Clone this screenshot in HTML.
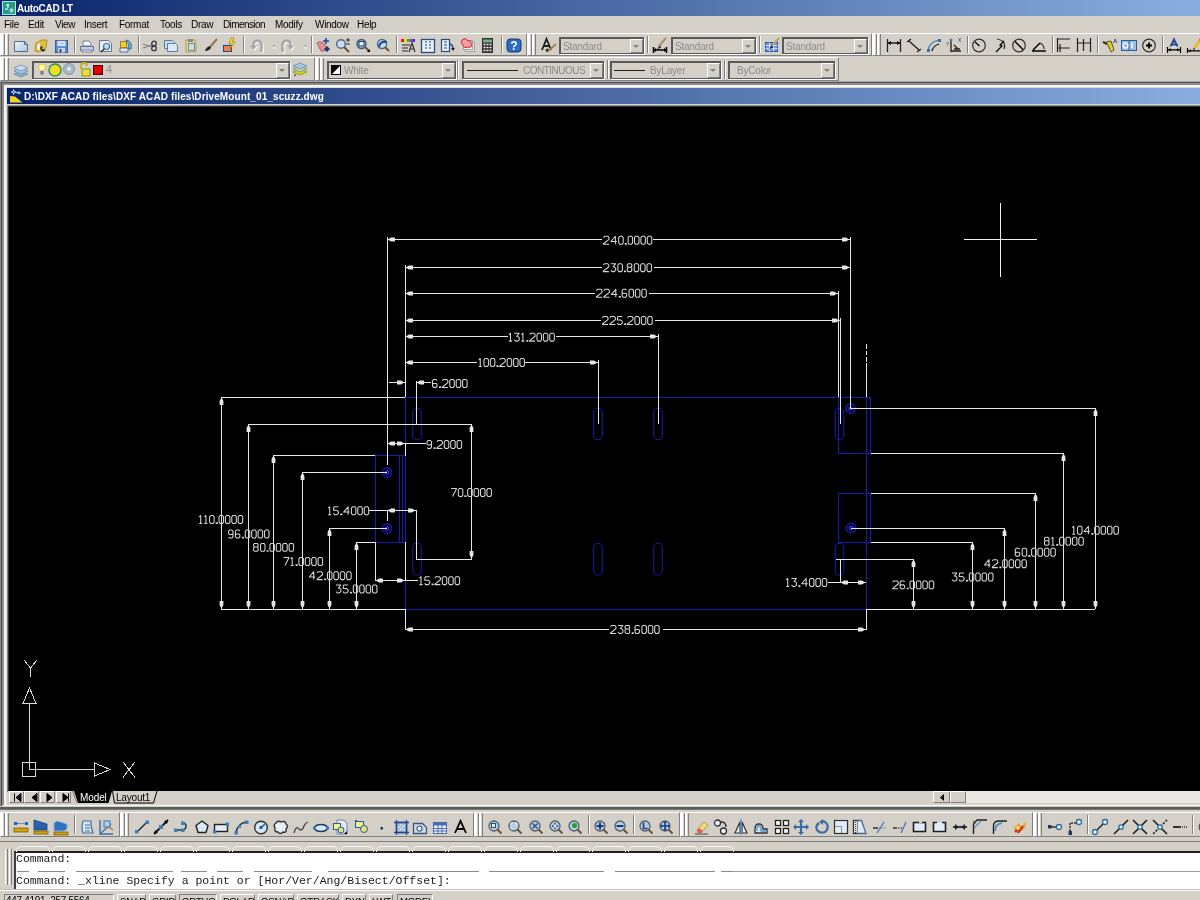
<!DOCTYPE html>
<html><head><meta charset="utf-8">
<style>
*{margin:0;padding:0;box-sizing:border-box}
html,body{width:1200px;height:900px;overflow:hidden;background:#d4d0c8;font-family:"Liberation Sans",sans-serif;font-size:11px;color:#000;position:relative}
#root{position:absolute;left:0;top:0;width:1200px;height:900px;overflow:hidden;will-change:transform}
.a{position:absolute}
#title{left:0;top:0;width:1200px;height:16px;background:linear-gradient(to right,#0a246a 0%,#8aaedf 100%)}
#title .t{left:17px;top:3px;color:#fff;font-weight:bold;font-size:10px;letter-spacing:-0.3px}
#menu{left:0;top:16px;width:1200px;height:17px;background:#d4d0c8}
#menu span{position:absolute;top:3px;font-size:10px;letter-spacing:-0.3px}
.tb{position:absolute;background:#d4d0c8;border-top:1px solid #fff;border-bottom:1px solid #808080;border-left:1px solid #fff;border-right:1px solid #808080}
.grip{position:absolute;top:0px;width:4px;bottom:0px;border-left:2px solid #fff;border-right:1px solid #808080}
.combo{position:absolute;background:#d4d0c8;border-top:2px solid #5a5a5a;border-left:2px solid #5a5a5a;border-bottom:1px solid #5a5a5a;border-right:1px solid #5a5a5a;box-shadow:1px 1px 0 #fff}
.combo .dd{position:absolute;right:0;top:0;width:13px;bottom:0;background:#d4d0c8;border-top:1px solid #fff;border-left:1px solid #fff;border-right:1px solid #808080;border-bottom:1px solid #808080}
.combo .dd:after{content:"";position:absolute;left:2px;top:5px;border-left:3px solid transparent;border-right:3px solid transparent;border-top:3px solid #808080}
.combo .txt{position:absolute;top:2px;color:#8c8c8c;font-size:10px;letter-spacing:-0.2px}
#canvas{left:8px;top:106px;width:1192px;height:685px;background:#000}
#dtitle{left:7px;top:88px;width:1200px;height:16px;background:linear-gradient(to right,#0a246a 0%,#8aaedf 100%)}
#dtitle .t{left:17px;top:3px;color:#fff;font-weight:bold;font-size:10px;letter-spacing:0.1px}
.navb{position:absolute;top:791px;width:15px;height:12px;background:#d4d0c8;border-top:1px solid #fff;border-left:1px solid #fff;border-right:1px solid #808080;border-bottom:1px solid #808080}
.ctab{position:absolute;top:846px;width:34px;height:6px;border:1px solid #f4f4f4;border-bottom:none;border-radius:5px 5px 0 0}
.cmd{font-family:"Liberation Mono",monospace;font-size:11.5px;color:#1a1a1a;white-space:pre}
.sb,.sp{position:absolute;top:894px;height:10px;overflow:hidden}
.sb{border-top:1px solid #fff;border-left:1px solid #fff;border-right:1px solid #808080}
.sp{border-top:1px solid #808080;border-left:1px solid #808080;border-right:1px solid #fff}
.sb span,.sp span{position:absolute;left:2px;top:0px;line-height:11px;font-size:9.5px;letter-spacing:-0.1px;white-space:nowrap}
</style></head><body><div id="root">
<div id="title" class="a">
  <svg width="16" height="16" style="position:absolute;left:2px;top:1px">
    <rect x="0.5" y="0.5" width="13" height="13" fill="#2a9a88" stroke="#9ff0e6"/>
    <path d="M4 4h3M6 3v4M9 9h1M3 8h3" stroke="#fff" stroke-width="1" fill="none"/>
    <circle cx="9.5" cy="9.5" r="1.5" stroke="#fff" fill="none"/>
  </svg>
  <div class="a t">AutoCAD LT</div>
</div>
<div id="menu" class="a">
  <span style="left:4px">File</span>
  <span style="left:28px">Edit</span>
  <span style="left:55px">View</span>
  <span style="left:84px">Insert</span>
  <span style="left:119px">Format</span>
  <span style="left:160px">Tools</span>
  <span style="left:191px">Draw</span>
  <span style="left:223px;letter-spacing:-0.6px">Dimension</span>
  <span style="left:275px">Modify</span>
  <span style="left:315px">Window</span>
  <span style="left:357px">Help</span>
</div>
<!--UI-->
<div class="tb" style="left:0px;top:33px;width:527px;height:23px"><div class="grip" style="left:0px"></div><div class="grip" style="left:4px"></div></div>
<div class="tb" style="left:527px;top:33px;width:345px;height:23px"><div class="grip" style="left:0px"></div><div class="grip" style="left:4px"></div></div>
<div class="tb" style="left:872px;top:33px;width:340px;height:23px"><div class="grip" style="left:0px"></div><div class="grip" style="left:4px"></div></div>
<div class="a" style="left:74px;top:36px;width:1px;height:17px;background:#808080"></div><div class="a" style="left:75px;top:36px;width:1px;height:17px;background:#fff"></div>
<div class="a" style="left:138px;top:36px;width:1px;height:17px;background:#808080"></div><div class="a" style="left:139px;top:36px;width:1px;height:17px;background:#fff"></div>
<div class="a" style="left:243px;top:36px;width:1px;height:17px;background:#808080"></div><div class="a" style="left:244px;top:36px;width:1px;height:17px;background:#fff"></div>
<div class="a" style="left:311px;top:36px;width:1px;height:17px;background:#808080"></div><div class="a" style="left:312px;top:36px;width:1px;height:17px;background:#fff"></div>
<div class="a" style="left:396px;top:36px;width:1px;height:17px;background:#808080"></div><div class="a" style="left:397px;top:36px;width:1px;height:17px;background:#fff"></div>
<div class="a" style="left:501px;top:36px;width:1px;height:17px;background:#808080"></div><div class="a" style="left:502px;top:36px;width:1px;height:17px;background:#fff"></div>
<div class="combo" style="left:559px;top:37px;width:85px;height:17px"><div class="dd"></div><div class="txt" style="left:2px">Standard</div></div>
<div class="combo" style="left:671px;top:37px;width:85px;height:17px"><div class="dd"></div><div class="txt" style="left:2px">Standard</div></div>
<div class="combo" style="left:782px;top:37px;width:86px;height:17px"><div class="dd"></div><div class="txt" style="left:2px">Standard</div></div>
<div class="a" style="left:647px;top:36px;width:1px;height:17px;background:#808080"></div><div class="a" style="left:648px;top:36px;width:1px;height:17px;background:#fff"></div>
<div class="a" style="left:759px;top:36px;width:1px;height:17px;background:#808080"></div><div class="a" style="left:760px;top:36px;width:1px;height:17px;background:#fff"></div>
<div class="a" style="left:967px;top:36px;width:1px;height:17px;background:#808080"></div><div class="a" style="left:968px;top:36px;width:1px;height:17px;background:#fff"></div>
<div class="a" style="left:1052px;top:36px;width:1px;height:17px;background:#808080"></div><div class="a" style="left:1053px;top:36px;width:1px;height:17px;background:#fff"></div>
<div class="a" style="left:1097px;top:36px;width:1px;height:17px;background:#808080"></div><div class="a" style="left:1098px;top:36px;width:1px;height:17px;background:#fff"></div>
<div class="a" style="left:1162px;top:36px;width:1px;height:17px;background:#808080"></div><div class="a" style="left:1163px;top:36px;width:1px;height:17px;background:#fff"></div>
<div class="tb" style="left:0px;top:57px;width:315px;height:24px"><div class="grip" style="left:0px"></div><div class="grip" style="left:4px"></div></div>
<div class="tb" style="left:315px;top:57px;width:524px;height:24px"><div class="grip" style="left:0px"></div><div class="grip" style="left:4px"></div></div>
<div class="combo" style="left:32px;top:61px;width:258px;height:18px"><div class="dd"></div></div>
<div class="a" style="left:93px;top:65px;width:10px;height:10px;background:#e00000;border:1px solid #400000"></div>
<div class="a" style="left:106px;top:63px;color:#8c8c8c;font-size:11px">4</div>
<div class="combo" style="left:327px;top:61px;width:129px;height:18px"><div class="dd"></div><div class="txt" style="left:15px">White</div></div>
<div class="a" style="left:457px;top:60px;width:1px;height:19px;background:#808080"></div><div class="a" style="left:458px;top:60px;width:1px;height:19px;background:#fff"></div>
<div class="combo" style="left:462px;top:61px;width:142px;height:18px"><div class="dd"></div><div class="txt" style="left:59px"><span style="letter-spacing:-0.5px">CONTINUOUS</span></div><div class="a" style="left:3px;top:7px;width:51px;height:1px;background:#202020"></div></div>
<div class="a" style="left:607px;top:60px;width:1px;height:19px;background:#808080"></div><div class="a" style="left:608px;top:60px;width:1px;height:19px;background:#fff"></div>
<div class="combo" style="left:610px;top:61px;width:111px;height:18px"><div class="dd"></div><div class="txt" style="left:38px">ByLayer</div><div class="a" style="left:2px;top:7px;width:31px;height:1px;background:#202020"></div></div>
<div class="a" style="left:724px;top:60px;width:1px;height:19px;background:#808080"></div><div class="a" style="left:725px;top:60px;width:1px;height:19px;background:#fff"></div>
<div class="combo" style="left:728px;top:61px;width:107px;height:18px"><div class="dd"></div><div class="txt" style="left:7px">ByColor</div></div>
<div class="tb" style="left:0px;top:812px;width:120px;height:25px"><div class="grip" style="left:0px"></div><div class="grip" style="left:4px"></div></div>
<div class="tb" style="left:120px;top:812px;width:354px;height:25px"><div class="grip" style="left:0px"></div><div class="grip" style="left:4px"></div></div>
<div class="tb" style="left:474px;top:812px;width:206px;height:25px"><div class="grip" style="left:0px"></div><div class="grip" style="left:4px"></div></div>
<div class="tb" style="left:680px;top:812px;width:353px;height:25px"><div class="grip" style="left:0px"></div><div class="grip" style="left:4px"></div></div>
<div class="tb" style="left:1033px;top:812px;width:180px;height:25px"><div class="grip" style="left:0px"></div><div class="grip" style="left:4px"></div></div>
<div class="a" style="left:74px;top:815px;width:1px;height:19px;background:#808080"></div><div class="a" style="left:75px;top:815px;width:1px;height:19px;background:#fff"></div>
<div class="a" style="left:588px;top:815px;width:1px;height:19px;background:#808080"></div><div class="a" style="left:589px;top:815px;width:1px;height:19px;background:#fff"></div>
<div class="a" style="left:633px;top:815px;width:1px;height:19px;background:#808080"></div><div class="a" style="left:634px;top:815px;width:1px;height:19px;background:#fff"></div>
<div class="a" style="left:1087px;top:815px;width:1px;height:19px;background:#808080"></div><div class="a" style="left:1088px;top:815px;width:1px;height:19px;background:#fff"></div>
<div class="a" style="left:1192px;top:815px;width:1px;height:19px;background:#808080"></div><div class="a" style="left:1193px;top:815px;width:1px;height:19px;background:#fff"></div>
<svg id="icons" width="1200" height="900" style="position:absolute;left:0;top:0;pointer-events:none"><g transform="translate(13,37)"><defs><linearGradient id="gnew" x1="0" y1="0" x2="1" y2="1"><stop offset="0" stop-color="#f4f8fc"/><stop offset="1" stop-color="#a8c4dc"/></linearGradient></defs><path d="M1.5 4.5h10l3 3v7h-13z" fill="url(#gnew)" stroke="#4c6c94"/><path d="M11.5 4.5v3h3" fill="none" stroke="#4c6c94"/></g>
<g transform="translate(33,37)"><path d="M2 14 L3 6 L9 3 L14 3 L13 11 L6 15 Z" fill="#e0c040" stroke="#b09020"/><path d="M4 8 L7 6 L7 13 L4 12Z" fill="#f0f0e0"/><path d="M8 9 Q6 12 9 14 L11 14 L9 12 Q8 11 10 10Z" fill="#202020"/><path d="M9 15 l4 -2 l-3 -1z" fill="#202020"/></g>
<g transform="translate(54,37)"><rect x="1.5" y="3.5" width="12" height="12" fill="#5a88cc" stroke="#3a5a98"/><rect x="3.5" y="4" width="8" height="5" fill="#e4eef8" stroke="#9ab4d8" stroke-width="0.6"/><path d="M5 6.5h5" stroke="#a0b0c8"/><rect x="4" y="11" width="7" height="4.5" fill="#c8d8ec"/><rect x="5.5" y="12" width="2" height="3.5" fill="#2a4a88"/></g>
<g transform="translate(79,37)"><path d="M4 4h6l2 2v3H4z" fill="#f8f8f8" stroke="#7080a0"/><path d="M1.5 9.5h13v4h-13z" fill="#c8d0e0" stroke="#6070a0"/><path d="M3 13h10v2H3z" fill="#e8ecf4" stroke="#6070a0" stroke-width="0.8"/></g>
<g transform="translate(98,37)"><path d="M1.5 3.5h9l3 3v8h-12z" fill="#e4ecf4" stroke="#607898"/><circle cx="8.5" cy="9.5" r="3" fill="#c8e0f0" stroke="#4a6a90" stroke-width="1.2"/><path d="M6.5 11.5 L3 15" stroke="#303030" stroke-width="1.5"/></g>
<g transform="translate(118,37)"><path d="M2 11 h8 v4 h-8z" fill="#e0e4f0" stroke="#6070a0"/><rect x="2.5" y="4.5" width="6" height="6" fill="#f0d030" stroke="#a08010"/><path d="M8 3 Q15 4 13 12 L10 12 Q12 6 8 5Z" fill="#60b0e0" stroke="#2a6090" stroke-width="0.8"/></g>
<g transform="translate(142,37)"><path d="M1 7 L10 10 M1 11 L10 8" stroke="#808080" stroke-width="1.3"/><circle cx="12" cy="6.5" r="2.3" fill="none" stroke="#303848" stroke-width="1.3"/><circle cx="12" cy="11.5" r="2.3" fill="none" stroke="#303848" stroke-width="1.3"/></g>
<g transform="translate(163,37)"><path d="M1.5 3.5h8l2 2v6h-10z" fill="#c8dcec" stroke="#5a7ca4"/><path d="M4.5 6.5h8l2 2v6h-10z" fill="#dce8f4" stroke="#5a7ca4"/></g>
<g transform="translate(183,37)"><path d="M3 3 h9 l1 3 v9 h-10z" fill="#e8d890" stroke="#b0a040"/><rect x="5" y="2" width="5" height="3" fill="#808890"/><rect x="5.5" y="6.5" width="6" height="7" fill="#c8dcec" stroke="#6a88a8"/></g>
<g transform="translate(203,37)"><path d="M14 2 L7 10" stroke="#8a7a60" stroke-width="2"/><path d="M7 9 Q3 10 2 14 Q6 14 8 11Z" fill="#202020"/></g>
<g transform="translate(222,37)"><rect x="1.5" y="8.5" width="8" height="6" fill="#f08050" stroke="#1a4a90"/><path d="M9 1 L7 7 L10 7 L8 12 L13 5 L10 5 L12 1Z" fill="#f8e030" stroke="#a08000" stroke-width="0.7"/></g>
<g transform="translate(249,37)"><g transform="translate(1,1)"><path d="M12 15 Q14.5 4 8.5 3.5 Q4 3.5 4.5 9" fill="none" stroke="#fff" stroke-width="2.6"/><path d="M1 8.5 L8 8.5 L4.5 13Z" fill="#fff"/></g><path d="M12 15 Q14.5 4 8.5 3.5 Q4 3.5 4.5 9" fill="none" stroke="#a8a8a8" stroke-width="2.6"/><path d="M1 8.5 L8 8.5 L4.5 13Z" fill="#a8a8a8"/></g>
<g transform="translate(279,37)"><g transform="translate(1,1)"><path d="M4 15 Q1.5 4 7.5 3.5 Q12 3.5 11.5 9" fill="none" stroke="#fff" stroke-width="2.6"/><path d="M15 8.5 L8 8.5 L11.5 13Z" fill="#fff"/></g><path d="M4 15 Q1.5 4 7.5 3.5 Q12 3.5 11.5 9" fill="none" stroke="#a8a8a8" stroke-width="2.6"/><path d="M15 8.5 L8 8.5 L11.5 13Z" fill="#a8a8a8"/></g>
<g transform="translate(315,37)"><path d="M2 6 Q4 3 8 6 L12 10 L10 14 L6 14 Z" fill="#e09090" stroke="#a05050" stroke-width="0.8"/><path d="M11 1v6M8 4h6" stroke="#1a4a90" stroke-width="1.6"/><path d="M9 12 l3 -3 l3 3 l-3 3z" fill="#1a3a70"/></g>
<g transform="translate(335,37)"><circle cx="6" cy="7" r="4.3" fill="#c8dcf0" stroke="#506880" stroke-width="1.4"/><path d="M9 10 L14 15" stroke="#705030" stroke-width="2"/><path d="M11 3h4M13 1v4M11 7h4" stroke="#303030" stroke-width="1"/></g>
<g transform="translate(355,37)"><circle cx="6.5" cy="7" r="4.5" fill="#a8c8e8" stroke="#405878" stroke-width="1.4"/><rect x="4" y="4.5" width="5" height="4.5" fill="#e8f0f8" stroke="#203860"/><path d="M10 10 L14 14" stroke="#705030" stroke-width="2"/><path d="M12 15 h3 v-3z" fill="#000"/></g>
<g transform="translate(375,37)"><circle cx="7" cy="7" r="4.5" fill="#c8dcf0" stroke="#506880" stroke-width="1.4"/><path d="M4 10 Q5 4 12 5" fill="none" stroke="#1a4a90" stroke-width="2"/><path d="M10 10 L14 14" stroke="#705030" stroke-width="2"/></g>
<g transform="translate(400,37)"><rect x="1" y="2" width="3" height="3" fill="#e02020"/><rect x="4" y="2" width="3" height="3" fill="#f0d020"/><rect x="7" y="2" width="3" height="3" fill="#20c020"/><rect x="10" y="2" width="3" height="3" fill="#c020e0"/><rect x="13" y="2" width="2" height="3" fill="#2040e0"/><path d="M2 8h8M2 11h6M2 14h6" stroke="#606060" stroke-width="1.5"/><path d="M9 15 L12 6 L15 15 M10 12h4" fill="none" stroke="#303030" stroke-width="1.2"/></g>
<g transform="translate(420,37)"><rect x="1.5" y="2.5" width="13" height="13" fill="#e8f0f8" stroke="#2a4a80" stroke-width="1.3"/><path d="M5 5h2M9 5h2M5 8h2M9 8h2M5 11h2M9 11h2" stroke="#5080b0" stroke-width="1.6"/></g>
<g transform="translate(440,37)"><rect x="1.5" y="2.5" width="8" height="12" fill="#e8f0f8" stroke="#2a4a80" stroke-width="1.2"/><path d="M4 5h3M4 8h3M4 11h3" stroke="#5080b0" stroke-width="1.4"/><path d="M9 7 Q13 7 13 12" fill="none" stroke="#2a4a80" stroke-width="1.5"/><path d="M11 11 l2 3 l2 -3z" fill="#202020"/></g>
<g transform="translate(460,37)"><rect x="5.5" y="5.5" width="9" height="9" fill="#e8e8e8" stroke="#a0a0a0"/><rect x="3.5" y="3.5" width="9" height="9" fill="#f0f0f0" stroke="#a0a0a0"/><path d="M2 3 Q6 0 8 4 Q12 3 11 7 Q13 11 8 10 Q4 12 3 8 Q0 6 2 3Z" fill="#f0a0a0" stroke="#d02020"/></g>
<g transform="translate(480,37)"><rect x="2" y="1" width="11" height="15" fill="#303030"/><rect x="3" y="2.5" width="9" height="3" fill="#80b080"/><path d="M3.5 7.5h2M6.5 7.5h2M9.5 7.5h2M3.5 10.5h2M6.5 10.5h2M9.5 10.5h2M3.5 13.5h2M6.5 13.5h2M9.5 13.5h2" stroke="#f0f0f0" stroke-width="1.4"/></g>
<g transform="translate(506,37)"><rect x="1" y="2" width="14" height="13" rx="3" fill="#2a6ac0" stroke="#1a3a80"/><text x="8" y="13" text-anchor="middle" font-family="Liberation Sans" font-weight="bold" font-size="12" fill="#fff">?</text></g>
<g transform="translate(266,37)"><path d="M6 8 L8 10 L10 8Z" fill="#a8a8a8"/><path d="M7 11h3" stroke="#fff"/></g>
<g transform="translate(297,37)"><path d="M6 8 L8 10 L10 8Z" fill="#a8a8a8"/><path d="M7 11h3" stroke="#fff"/></g>
<g transform="translate(541,37)"><path d="M1 13 L5.5 2 L10 13 M3 9h5" fill="none" stroke="#202020" stroke-width="1.8"/><path d="M15 7 L6 15" stroke="#a08050" stroke-width="2"/><path d="M5 14 l2 -2" stroke="#202020" stroke-width="2"/></g>
<g transform="translate(652,37)"><path d="M14 1 L7 9" stroke="#b09070" stroke-width="2"/><path d="M8 8 L5 12 L9 11Z" fill="#303030"/><path d="M1 13h14M1.5 10v6M14.5 10v6" stroke="#000" stroke-width="1.5"/><path d="M1 13 l3 -2 v4z M15 13 l-3 -2 v4z" fill="#000"/></g>
<g transform="translate(764,37)"><rect x="1.5" y="5.5" width="12" height="9" fill="#6a9ae0" stroke="#2a5ab0"/><path d="M1.5 8.5h12M1.5 11.5h12M5.5 5.5v9M9.5 5.5v9" stroke="#e8f0ff" stroke-width="0.8"/><path d="M15 1 L8 9" stroke="#c0a060" stroke-width="2"/><path d="M8 8 L5 12 L9 11Z" fill="#202020"/></g>
<g transform="translate(886,37)"><path d="M1.5 2v13M14.5 2v13M2 6h12" fill="none" stroke="#202020" stroke-width="1.3"/><path d="M2 6 l3 -2 v4z M14 6 l-3 -2 v4z" fill="#000"/></g>
<g transform="translate(906,37)"><path d="M1 5 L5 2 M11 15 L15 12 M3 4 L13 13" fill="none" stroke="#202020" stroke-width="1.3"/></g>
<g transform="translate(926,37)"><path d="M2 14 Q3 5 13 3" fill="none" stroke="#5090c0" stroke-width="1.3"/><path d="M6 14 Q7 9 13 7" fill="none" stroke="#202020" stroke-width="1.3"/><rect x="1" y="12" width="3" height="3" fill="#3a70a0"/><rect x="12" y="2" width="3" height="3" fill="#3a70a0"/></g>
<g transform="translate(946,37)"><path d="M5 4v11M5 14h10M8 8 L12 12M8 12h6" fill="none" stroke="#202020" stroke-width="1.3"/><circle cx="5" cy="3" r="1.5" fill="#5080b0"/><text x="0" y="9" font-size="5" fill="#303030" font-family="Liberation Sans">Y</text><text x="12" y="5" font-size="5" fill="#303030" font-family="Liberation Sans">X</text></g>
<g transform="translate(971,37)"><circle cx="8" cy="8.5" r="6.3" fill="none" stroke="#303030" stroke-width="1.2"/><path d="M4 5 L8.5 9" stroke="#000" stroke-width="1.3"/></g>
<g transform="translate(992,37)"><path d="M5 2 Q15 4 12 12" fill="none" stroke="#303030" stroke-width="1.2"/><path d="M12 4 L8 8 L10 9 L4 15" fill="none" stroke="#000" stroke-width="1.3"/></g>
<g transform="translate(1011,37)"><circle cx="8" cy="8.5" r="6.3" fill="none" stroke="#303030" stroke-width="1.2"/><path d="M4 4.5 L12 12.5" stroke="#000" stroke-width="1.3"/></g>
<g transform="translate(1031,37)"><path d="M1 14h14M2 13 L9 6" fill="none" stroke="#000" stroke-width="1.5"/><path d="M9 6 Q13 8 13 12" fill="none" stroke="#303030" stroke-width="1.2"/></g>
<g transform="translate(1056,37)"><path d="M1.5 1v14M14 2h-12M14 11h-12M4 7v8" fill="none" stroke="#202020" stroke-width="1.2"/></g>
<g transform="translate(1076,37)"><path d="M1.5 1v14M7.5 2v12M14.5 1v14M2 6h12" fill="none" stroke="#202020" stroke-width="1.2"/></g>
<g transform="translate(1101,37)"><path d="M2 5 L6 7" stroke="#303030" stroke-width="2"/><path d="M5 5 L10 4 L13 13 L10 15 L7 8Z" fill="#e0d020" stroke="#303030" stroke-width="0.8"/><text x="12" y="6" font-size="6" fill="#1a3a90" font-family="Liberation Sans" font-weight="bold">A</text></g>
<g transform="translate(1121,37)"><rect x="0.5" y="3.5" width="15" height="10" fill="#9ac0e8" stroke="#2a5a9a"/><path d="M8 3.5v10" stroke="#2a5a9a"/><circle cx="4.5" cy="8.5" r="2.5" fill="none" stroke="#fff" stroke-width="1.2"/><path d="M11 6v5" stroke="#fff" stroke-width="1.4"/></g>
<g transform="translate(1141,37)"><circle cx="8" cy="8.5" r="6.3" fill="none" stroke="#303030" stroke-width="1.2"/><path d="M5 8.5h6M8 5.5v6" stroke="#000" stroke-width="1.8"/></g>
<g transform="translate(1166,37)"><path d="M4.5 9.5 L8 2.5 L11.5 9.5 M6 7.5h4" fill="none" stroke="#2a4a90" stroke-width="2"/><path d="M5.5 10h5" stroke="#c8e8f0" stroke-width="1.5"/><path d="M1 12.8h14M1.5 10v6M14.5 10v6" stroke="#000" stroke-width="1.2"/><path d="M2 12.8 l3 -1.5 v3z M14 12.8 l-3 -1.5 v3z" fill="#000"/></g>
<g transform="translate(1186,37)"><path d="M15 2 L8.5 11" stroke="#e0c030" stroke-width="3"/><path d="M15 2 L13.5 4" stroke="#e08080" stroke-width="3"/><path d="M8.5 11 L7.5 13" stroke="#404040" stroke-width="1.5"/><path d="M1 13.8h14M1.5 11v5" stroke="#000" stroke-width="1.2"/><path d="M2 13.8 l3 -1.5 v3z" fill="#000"/></g>
<g transform="translate(13,63)"><path d="M1 11 L8 8 L15 11 L8 14Z" fill="#8ab0d0" stroke="#6a8aa8" stroke-width="0.8"/><path d="M1 8 L8 5 L15 8 L8 11Z" fill="#a8c8e0" stroke="#6a8aa8" stroke-width="0.8"/><path d="M1 5 L8 2 L15 5 L8 8Z" fill="#c8dcf0" stroke="#6a8aa8" stroke-width="0.8"/></g>
<g transform="translate(37,62)"><circle cx="5" cy="5.5" r="3.4" fill="#ffff90" stroke="#c8c040" stroke-width="0.8"/><rect x="3.5" y="9" width="3" height="3.5" fill="#7070a8"/></g>
<g transform="translate(47,62)"><circle cx="8" cy="8" r="6" fill="#f0e020" stroke="#3a8a60" stroke-width="1.5"/></g>
<g transform="translate(62,62)"><rect x="6" y="8" width="9" height="7" fill="#d0d0d0"/><circle cx="7" cy="7" r="5.5" fill="#a8b8c0" stroke="#8098a8"/><circle cx="7" cy="7" r="2" fill="#e0e8f0"/></g>
<g transform="translate(77,62)"><path d="M4 7 V4 Q4 1 7 1 Q10 1 10 4" fill="none" stroke="#c0b020" stroke-width="1.8"/><rect x="5" y="7" width="8" height="7" fill="#e8e040" stroke="#909010"/></g>
<g transform="translate(292,62)"><path d="M1 10 L8 7 L15 10 L8 13Z" fill="#e0d020" stroke="#909010" stroke-width="0.8"/><path d="M1 7 L8 4 L15 7 L8 10Z" fill="#c0d8a0" stroke="#6a8aa8" stroke-width="0.8"/><path d="M1 4 L8 1 L15 4 L8 7Z" fill="#a8c8e8" stroke="#6a8aa8" stroke-width="0.8"/><path d="M2 13 l2 -1 l-1 3z" fill="#1a3a80"/></g>
<g transform="translate(331,65)"><rect x="0.5" y="0.5" width="9" height="9" fill="#fff" stroke="#000"/><path d="M0.5 0.5 H9.5 L0.5 9.5Z" fill="#000"/></g>
<g transform="translate(13,819)"><rect x="1" y="3" width="3" height="3" fill="#2a60b0"/><rect x="12" y="3" width="3" height="3" fill="#2a60b0"/><path d="M4 4.5h8" stroke="#2a60b0" stroke-dasharray="1.5,1"/><rect x="1" y="9" width="14" height="4" fill="#d0a010" stroke="#806000" stroke-width="0.8"/></g>
<g transform="translate(33,819)"><path d="M1 1 L14 5 V11 H1Z" fill="#2a60b0" stroke="#1a4080" stroke-width="0.8"/><rect x="1" y="12" width="14" height="3" fill="#d0a010" stroke="#806000" stroke-width="0.8"/></g>
<g transform="translate(53,819)"><path d="M1 4 L4 2 L14 5 L14 10 L11 12 L1 12Z" fill="#3070c0" stroke="#80b0e0" stroke-width="1"/><rect x="1" y="13" width="14" height="3" fill="#d0a010" stroke="#806000" stroke-width="0.8"/></g>
<g transform="translate(80,819)"><path d="M3 2 h8 v3 M3 2 Q1 8 3 14 h10 Q11 8 11 5" fill="#d8e4f0" stroke="#3a70a8" stroke-width="1.2"/><path d="M5 6h5M5 9h5M5 12h5" stroke="#3a70a8"/></g>
<g transform="translate(98,819)"><path d="M2 1v14h13" fill="none" stroke="#3a70a8" stroke-width="1.4"/><path d="M2 15 L13 5" stroke="#3a70a8" stroke-width="1.2"/><rect x="6" y="2" width="6" height="6" fill="#a8d0f0" stroke="#3a70a8"/><path d="M11 8 L15 11" stroke="#c07030" stroke-width="1.5"/></g>
<g transform="translate(134,819)"><path d="M3 13 L13 3" stroke="#202830" stroke-width="1.5"/><rect x="1" y="11" width="3.5" height="3.5" fill="#3a80c0"/><rect x="11.5" y="1.5" width="3.5" height="3.5" fill="#3a80c0"/></g>
<g transform="translate(153,819)"><path d="M1 15 L15 1" stroke="#101010" stroke-width="1.8"/><rect x="6" y="6" width="4" height="4" fill="#3a80c0"/><path d="M1 15 l1 -4 l3 3z M15 1 l-4 1 l3 3z" fill="#000"/></g>
<g transform="translate(173,819)"><path d="M2 11h7 Q13 11 13 7 Q13 4 9 4" fill="none" stroke="#303030" stroke-width="1.5"/><rect x="1" y="9.5" width="3.5" height="3.5" fill="#3a80c0"/><rect x="8" y="9.5" width="3.5" height="3.5" fill="#3a80c0"/><rect x="8" y="2.5" width="3.5" height="3.5" fill="#3a80c0"/></g>
<g transform="translate(194,819)"><path d="M8 2 L14 6.5 L12 13.5 L4 13.5 L2 6.5Z" fill="#d8e8f8" stroke="#202020" stroke-width="1.4"/></g>
<g transform="translate(213,819)"><rect x="1.5" y="5.5" width="13" height="7" fill="#e0ecf8" stroke="#202020" stroke-width="1.4"/><rect x="0" y="11" width="3.5" height="3.5" fill="#3a80c0"/><rect x="12.5" y="3.5" width="3.5" height="3.5" fill="#3a80c0"/></g>
<g transform="translate(233,819)"><path d="M3 14 Q4 5 13 3" fill="none" stroke="#303030" stroke-width="1.4"/><rect x="1.5" y="12" width="3.5" height="3.5" fill="#3a80c0"/><rect x="12" y="1.5" width="3.5" height="3.5" fill="#3a80c0"/><rect x="5" y="6" width="3" height="3" fill="#3a80c0"/></g>
<g transform="translate(253,819)"><circle cx="8" cy="8.5" r="6.3" fill="#d8e8f8" stroke="#303030" stroke-width="1.4"/><path d="M8 8.5 L12 5" stroke="#1a60a0" stroke-width="1.5"/><rect x="6.5" y="7" width="3" height="3" fill="#1a60a0"/></g>
<g transform="translate(273,819)"><path d="M3 4 Q5 1 8 3 Q12 1 13 5 Q16 7 13 10 Q14 14 10 13 Q7 16 5 13 Q1 13 2 9 Q0 6 3 4Z" fill="#e8eef8" stroke="#303030" stroke-width="1.4"/></g>
<g transform="translate(293,819)"><path d="M1 14 Q3 6 6 10 Q9 13 11 7 Q12 4 15 3" fill="none" stroke="#404040" stroke-width="1.3"/></g>
<g transform="translate(313,819)"><ellipse cx="8" cy="9" rx="6.5" ry="3.5" fill="#d8e8f8" stroke="#1a3a60" stroke-width="1.6"/><rect x="0" y="7.5" width="3" height="3" fill="#3a80c0"/><rect x="13" y="7.5" width="3" height="3" fill="#3a80c0"/></g>
<g transform="translate(332,819)"><path d="M5 1h7l3 3v11h-10z" fill="#e0e8f4" stroke="#7080a0"/><rect x="1.5" y="4.5" width="7" height="6" fill="#f0f090" stroke="#2a5a9a"/><circle cx="9" cy="11" r="3" fill="#e0e080" stroke="#2a5a9a"/><path d="M12 15 h3 v-3z" fill="#000"/></g>
<g transform="translate(354,819)"><rect x="1.5" y="2.5" width="8" height="6" fill="#f0f090" stroke="#2a5a9a"/><circle cx="10" cy="10" r="3.5" fill="#e0e080" stroke="#2a5a9a"/><rect x="1" y="1" width="2" height="2" fill="#2a5a9a"/></g>
<g transform="translate(374,819)"><rect x="6.5" y="8" width="2.5" height="2.5" fill="#1a3a60"/></g>
<g transform="translate(393,819)"><rect x="3.5" y="3.5" width="10" height="10" fill="#c8d8e8" stroke="#1a4a90" stroke-width="1.5"/><path d="M1 3.5h15M1 13.5h15M3.5 1v15M13.5 1v15" stroke="#1a4a90" stroke-width="1.3"/><path d="M4 8 L8 4 M4 12 L12 4 M7 13 L13 7" stroke="#8090a0" stroke-width="0.8"/></g>
<g transform="translate(412,819)"><path d="M1.5 4.5h9l4 4v6h-13z" fill="#c8dcf0" stroke="#405878" stroke-width="1.3"/><circle cx="7.5" cy="9.5" r="2.5" fill="#fff" stroke="#405878" stroke-width="1.2"/></g>
<g transform="translate(432,819)"><rect x="1.5" y="3.5" width="13" height="11" fill="#f0f4fc" stroke="#4a6ab0"/><rect x="1.5" y="3.5" width="13" height="3" fill="#4a6ab0"/><path d="M1.5 9.5h13M1.5 12h13M6 6v9M10 6v9" stroke="#4a6ab0"/></g>
<g transform="translate(453,819)"><path d="M2 14 L7.5 2 L13 14 M4.5 10h6" fill="none" stroke="#000" stroke-width="1.8"/></g>
<g transform="translate(487,819)"><circle cx="7" cy="7" r="5" fill="#b8cce0" stroke="#506070" stroke-width="1.3"/><rect x="4.5" y="4.5" width="4" height="4" fill="#e0f0ff" stroke="#2a4a80"/><path d="M10.5 10.5 L14.5 14.5" stroke="#705030" stroke-width="2"/></g>
<g transform="translate(507,819)"><circle cx="7" cy="7" r="5" fill="#b8cce0" stroke="#506070" stroke-width="1.3"/><path d="M4 4h2M4 4v2M10 4h-2M10 4v2M4 10h2M4 10v-2" stroke="#e0f0ff" stroke-width="1.2"/><path d="M10.5 10.5 L14.5 14.5" stroke="#705030" stroke-width="2"/></g>
<g transform="translate(528,819)"><circle cx="7" cy="7" r="5" fill="#b8cce0" stroke="#506070" stroke-width="1.3"/><path d="M4.5 4.5 L9.5 9.5 M9.5 4.5 L4.5 9.5" stroke="#2a4a80" stroke-width="1.4"/><path d="M10.5 10.5 L14.5 14.5" stroke="#705030" stroke-width="2"/></g>
<g transform="translate(548,819)"><circle cx="7" cy="7" r="5" fill="#b8cce0" stroke="#506070" stroke-width="1.3"/><path d="M7 4v6M4 7h6" stroke="#1a3a80" stroke-width="1.4"/><circle cx="7" cy="7" r="1.5" fill="#e0f0ff"/><path d="M10.5 10.5 L14.5 14.5" stroke="#705030" stroke-width="2"/></g>
<g transform="translate(567,819)"><circle cx="7" cy="7" r="5" fill="#b8cce0" stroke="#506070" stroke-width="1.3"/><circle cx="7.5" cy="6.5" r="2.5" fill="#20a030"/><path d="M10.5 10.5 L14.5 14.5" stroke="#705030" stroke-width="2"/></g>
<g transform="translate(593,819)"><circle cx="7" cy="7" r="5" fill="#b8cce0" stroke="#506070" stroke-width="1.3"/><path d="M7 3.5v7M3.5 7h7" stroke="#1a3a80" stroke-width="2"/><path d="M10.5 10.5 L14.5 14.5" stroke="#705030" stroke-width="2"/></g>
<g transform="translate(613,819)"><circle cx="7" cy="7" r="5" fill="#b8cce0" stroke="#506070" stroke-width="1.3"/><path d="M3.5 7h7" stroke="#1a3a80" stroke-width="2"/><path d="M10.5 10.5 L14.5 14.5" stroke="#705030" stroke-width="2"/></g>
<g transform="translate(638,819)"><circle cx="7" cy="7" r="5" fill="#b8cce0" stroke="#506070" stroke-width="1.3"/><path d="M5.5 3.5v6h4" fill="none" stroke="#1a3a80" stroke-width="1.6"/><path d="M10.5 10.5 L14.5 14.5" stroke="#705030" stroke-width="2"/></g>
<g transform="translate(658,819)"><circle cx="7" cy="7" r="5" fill="#b8cce0" stroke="#506070" stroke-width="1.3"/><path d="M7 3v8M3 7h8" stroke="#1a3a80" stroke-width="1.6"/><path d="M7 2 l-2 2h4z M7 12 l-2 -2h4z M2 7 l2 -2v4z M12 7 l-2 -2v4z" fill="#1a3a80"/><path d="M10.5 10.5 L14.5 14.5" stroke="#705030" stroke-width="2"/></g>
<g transform="translate(693,819)"><path d="M2 15h13" stroke="#404040"/><path d="M4 11 L11 3 L15 6 L8 14 L5 14Z" fill="#f0e070" stroke="#a08040" stroke-width="0.8"/><path d="M4 11 L6 9 L10 12 L8 14 L5 14Z" fill="#e06060"/></g>
<g transform="translate(713,819)"><circle cx="4.5" cy="4" r="3" fill="#e8f0f8" stroke="#303030" stroke-width="1.3"/><circle cx="10.5" cy="12" r="3" fill="#e8f0f8" stroke="#303030" stroke-width="1.3"/><path d="M8 3 Q13 3 13 8" fill="none" stroke="#303030" stroke-width="1.4"/></g>
<g transform="translate(733,819)"><path d="M7 3 L2 14h5z M9 3 L14 14h-5z" fill="#e8f0f8" stroke="#303030" stroke-width="1.2"/><path d="M8 0v16" stroke="#5090d0" stroke-width="1.5"/></g>
<g transform="translate(753,819)"><path d="M2 14 V10 Q2 5 6 5 Q10 5 10 10 H14 V14Z" fill="#d8e8f8" stroke="#303030" stroke-width="1.3"/><path d="M4 12 V10 Q4 7 6 7 Q8 7 8 10 V12 H14" fill="none" stroke="#5090d0" stroke-width="1.3"/></g>
<g transform="translate(774,819)"><rect x="1.5" y="1.5" width="5" height="5" fill="#fff" stroke="#202020" stroke-width="1.3"/><rect x="9.5" y="1.5" width="5" height="5" fill="#fff" stroke="#202020" stroke-width="1.3"/><rect x="1.5" y="9.5" width="5" height="5" fill="#fff" stroke="#202020" stroke-width="1.3"/><rect x="9.5" y="9.5" width="5" height="5" fill="#fff" stroke="#202020" stroke-width="1.3"/></g>
<g transform="translate(793,819)"><path d="M8 1v14M1 8h14" stroke="#3a6aa8" stroke-width="2.2"/><path d="M8 0 l-3 3h6z M8 16 l-3 -3h6z M0 8 l3 -3v6z M16 8 l-3 -3v6z" fill="#3a6aa8"/></g>
<g transform="translate(814,819)"><path d="M5 4 Q1 7 3 11 Q6 15 11 13 Q15 10 13 5 Q11 2 8 2" fill="none" stroke="#3a6aa8" stroke-width="2.2"/><path d="M9 0 L5 3 L9 6z" fill="#3a6aa8"/></g>
<g transform="translate(833,819)"><rect x="1.5" y="1.5" width="13" height="13" fill="#e0ecf8" stroke="#303030" stroke-width="1.2"/><path d="M1.5 7.5h7v7" fill="none" stroke="#303030" stroke-dasharray="1,1"/></g>
<g transform="translate(852,819)"><rect x="1.5" y="1.5" width="4" height="13" fill="#f8f8f8" stroke="#303030" stroke-width="1.3"/><path d="M5.5 1.5h4 L14 14.5h-8.5" fill="#dce8f4" stroke="#4a6a90" stroke-width="1.3"/><path d="M3.5 3v11" stroke="#303030" stroke-dasharray="1,1"/></g>
<g transform="translate(872,819)"><path d="M1 9h5" stroke="#303030" stroke-width="1.5"/><path d="M7 9h7" stroke="#5080b0" stroke-dasharray="1.5,1"/><path d="M5 14 L12 3" stroke="#4a70c0" stroke-width="1.3"/></g>
<g transform="translate(892,819)"><path d="M1 9h4" stroke="#303030" stroke-width="1.5"/><path d="M6 9h4" stroke="#303030" stroke-dasharray="1.5,1"/><path d="M9 14 L14 3" stroke="#4a70c0" stroke-width="1.3"/></g>
<g transform="translate(912,819)"><rect x="1.5" y="3.5" width="12" height="9" fill="#e0ecf8" stroke="#202020" stroke-width="1.6"/><path d="M7 3h3" stroke="#d4d0c8" stroke-width="2"/></g>
<g transform="translate(932,819)"><path d="M5 3.5 H1.5v9h12v-9H10" fill="#e0ecf8" stroke="#202020" stroke-width="1.6"/></g>
<g transform="translate(952,819)"><path d="M1 8h14" stroke="#202020" stroke-width="1.8"/><path d="M7 8 l-4 -3v6z M9 8 l4 -3v6z" fill="#202838"/></g>
<g transform="translate(972,819)"><path d="M1.5 15V5 L5 1h10" fill="none" stroke="#202020" stroke-width="1.4"/><path d="M2 9 L9 2" stroke="#5090d0" stroke-width="1.3"/><path d="M1.5 2v12" stroke="#202020" stroke-dasharray="1,1.5"/></g>
<g transform="translate(992,819)"><path d="M1.5 15V7 Q1.5 2 7 2h8" fill="none" stroke="#202020" stroke-width="1.4"/><path d="M3 12 Q3 5 10 4" fill="none" stroke="#5090d0" stroke-width="2"/></g>
<g transform="translate(1012,819)"><path d="M4 14 L2 9 L7 4 L10 8 L14 2 L13 9 L8 13Z" fill="#e8a030"/><path d="M3 13 L7 9 M6 14 L11 7" stroke="#d02020" stroke-width="2"/><circle cx="6" cy="9" r="2" fill="#f0e060"/></g>
<g transform="translate(1047,819)"><rect x="1" y="6" width="3.5" height="3.5" fill="#1a3a60"/><path d="M4 8h6" stroke="#303030" stroke-width="1.5"/><circle cx="12" cy="8" r="2.5" fill="#e8f4ff" stroke="#2a6aa0" stroke-width="1.3"/></g>
<g transform="translate(1067,819)"><path d="M3 12V4h9" fill="none" stroke="#303030" stroke-width="1.5" stroke-dasharray="2,1"/><circle cx="12" cy="3" r="2.5" fill="#e8f4ff" stroke="#2a6aa0" stroke-width="1.3"/><rect x="1.5" y="12" width="3.5" height="4" fill="#1a3a60"/></g>
<g transform="translate(1092,819)"><path d="M3 13 L13 3" stroke="#202020" stroke-width="1.4"/><circle cx="3" cy="13" r="2.5" fill="#e8f4ff" stroke="#2a6aa0" stroke-width="1.3"/><circle cx="13" cy="3" r="2.5" fill="#e8f4ff" stroke="#2a6aa0" stroke-width="1.3"/></g>
<g transform="translate(1113,819)"><path d="M1 15 L15 1" stroke="#202020" stroke-width="1.6"/><circle cx="8" cy="8" r="2.2" fill="#e8f4ff" stroke="#2a6aa0" stroke-width="1.3"/></g>
<g transform="translate(1132,819)"><path d="M1 1 L15 15 M15 1 L1 15" stroke="#202020" stroke-width="1.6"/><circle cx="8" cy="8" r="2.2" fill="#e8f4ff" stroke="#2a6aa0" stroke-width="1.3"/></g>
<g transform="translate(1152,819)"><path d="M1 1 L15 15" stroke="#202020" stroke-width="1.6"/><path d="M15 1 L1 15" stroke="#202020" stroke-width="1.6" stroke-dasharray="2,1.5"/><circle cx="8" cy="8" r="2.2" fill="#e8f4ff" stroke="#2a6aa0" stroke-width="1.3"/></g>
<g transform="translate(1172,819)"><path d="M1 8h8" stroke="#303030" stroke-width="2"/><path d="M10 8h5" stroke="#303030" stroke-width="1.5" stroke-dasharray="1,1"/></g>
<g transform="translate(1197,819)"><circle cx="8" cy="8" r="6" fill="#a0a0a0" stroke="#404040"/></g></svg>
<!--/UI-->
<!-- MDI client edge -->
<div class="a" style="left:0;top:81px;width:1200px;height:1px;background:#a8a8a8"></div>
<div class="a" style="left:0;top:81px;width:1px;height:726px;background:#8a8a8a"></div>
<div class="a" style="left:1px;top:82px;width:1199px;height:1px;background:#505050"></div>
<div class="a" style="left:1px;top:82px;width:1px;height:725px;background:#484848"></div>
<div class="a" style="left:2px;top:83px;width:1198px;height:2px;background:#8c8c8c"></div>
<div class="a" style="left:2px;top:83px;width:2px;height:722px;background:#8e8e8e"></div>
<div class="a" style="left:4px;top:85px;width:1196px;height:2px;background:#f4f4f0"></div>
<div class="a" style="left:4px;top:85px;width:2px;height:720px;background:#f4f4f0"></div>
<div class="a" style="left:6px;top:87px;width:1194px;height:1px;background:#dcdcd8"></div>
<div class="a" style="left:6px;top:87px;width:1px;height:718px;background:#dcdcd8"></div>
<div id="dtitle" class="a">
  <svg width="18" height="16" style="position:absolute;left:0px;top:0px">
    <path d="M3 8 L8 8.5 L15.5 14.5 L3 14.5 Z" fill="#f4d020"/>
    <path d="M6.6 1 L7.6 3 L9.6 4 L7.6 5 L6.6 7 L5.6 5 L3.6 4 L5.6 3 Z" fill="#e8f4ff"/>
    <path d="M8 4.3 L12.5 5" stroke="#b0d0f0" stroke-width="1.2"/>
    <path d="M11.5 3 L14.5 5.3 L11 6.5 Z" fill="#a0c0e8"/>
    <circle cx="6.6" cy="4" r="1" fill="#406080"/>
  </svg>
  <div class="a t">D:\DXF ACAD files\DXF ACAD files\DriveMount_01_scuzz.dwg</div>
</div>
<div id="canvas" class="a"></div>
<div class="a" style="left:7px;top:105px;width:1px;height:687px;background:#808080"></div>
<div class="a" style="left:8px;top:106px;width:1px;height:685px;background:#303030"></div>
<div class="a" style="left:7px;top:105px;width:1193px;height:1px;background:#9a9a9a"></div>
<div class="a" style="left:8px;top:106px;width:1192px;height:1px;background:#303030"></div>
<!-- tab row -->
<div class="a" style="left:8px;top:791px;width:1192px;height:12px;background:#d4d0c8"></div>
<div class="navb" style="left:9px"></div><div class="navb" style="left:24px"></div><div class="navb" style="left:40px"></div><div class="navb" style="left:56px"></div>
<svg width="200" height="14" style="position:absolute;left:0;top:790px">
 <path d="M14.5 3.5v8M21 3.5 L16 7.5 L21 11.5Z M37 3.5 L32 7.5 L37 11.5Z M47 3.5 L52 7.5 L47 11.5Z M63 3.5 L68 7.5 L63 11.5Z M68.5 3.5v8" fill="#000" stroke="#000" stroke-width="1"/>
 <path d="M74 1 L78 13 L108.5 13 L112 1Z" fill="#000"/>
 <path d="M72.5 1 L77 13" stroke="#808080" fill="none"/>
 <path d="M112.5 1 L114.5 13 L153.5 13 L157 1" fill="#d4d0c8" stroke="#000" stroke-width="1"/>
</svg>
<div class="a" style="left:80px;top:792px;color:#fff;font-size:10px;letter-spacing:-0.1px">Model</div>
<div class="a" style="left:116px;top:792px;color:#000;font-size:10px;letter-spacing:-0.2px">Layout1</div>
<div class="a" style="left:933px;top:791px;width:267px;height:12px;background:#e9e7e2"></div>
<div class="navb" style="left:933px;width:17px"></div><div class="navb" style="left:950px;width:16px"></div>
<svg width="10" height="10" style="position:absolute;left:938px;top:792px"><path d="M6 2 L2 5.5 L6 9Z" fill="#000"/></svg>
<div class="a" style="left:4px;top:805px;width:1196px;height:1px;background:#fcfcf8"></div>
<div class="a" style="left:0;top:806px;width:1200px;height:1px;background:#c8c8c4"></div>
<div class="a" style="left:0;top:807px;width:1200px;height:2px;background:#5c5c58"></div>
<div class="a" style="left:0;top:809px;width:1200px;height:1px;background:#747470"></div>
<div class="a" style="left:0;top:841px;width:1200px;height:1px;background:#808080"></div>
<!-- command window -->
<div class="a" style="left:14px;top:846px;width:1186px;height:6px;background:#d4d0c8"></div>
<div class="a" style="left:14px;top:851px;width:1186px;height:38px;background:#fff;border-top:2px solid #202020;border-left:2px solid #404040"></div>
<div class="a" style="left:5px;top:849px;width:3px;height:36px;border-left:1px solid #fff;border-right:1px solid #808080"></div>
<div class="a" style="left:9px;top:849px;width:3px;height:36px;border-left:1px solid #fff;border-right:1px solid #808080"></div>
<div class="ctab" style="left:16px"></div><div class="ctab" style="left:52px"></div><div class="ctab" style="left:88px"></div><div class="ctab" style="left:124px"></div><div class="ctab" style="left:160px"></div><div class="ctab" style="left:196px"></div><div class="ctab" style="left:232px"></div><div class="ctab" style="left:268px"></div><div class="ctab" style="left:304px"></div><div class="ctab" style="left:340px"></div><div class="ctab" style="left:376px"></div><div class="ctab" style="left:412px"></div><div class="ctab" style="left:448px"></div><div class="ctab" style="left:484px"></div><div class="ctab" style="left:520px"></div><div class="ctab" style="left:556px"></div><div class="ctab" style="left:592px"></div><div class="ctab" style="left:628px"></div><div class="ctab" style="left:664px"></div><div class="ctab" style="left:700px"></div>
<div class="a" style="left:733px;top:871px;width:467px;height:1px;background:#a0a0a0"></div>
<div class="a" style="left:17px;top:871px;width:12px;height:1px;background:#8a8a8a"></div><div class="a" style="left:38px;top:871px;width:27px;height:1px;background:#8a8a8a"></div><div class="a" style="left:76px;top:871px;width:97px;height:1px;background:#8a8a8a"></div><div class="a" style="left:181px;top:871px;width:26px;height:1px;background:#8a8a8a"></div><div class="a" style="left:217px;top:871px;width:26px;height:1px;background:#8a8a8a"></div><div class="a" style="left:254px;top:871px;width:58px;height:1px;background:#8a8a8a"></div><div class="a" style="left:328px;top:871px;width:151px;height:1px;background:#8a8a8a"></div><div class="a" style="left:489px;top:871px;width:115px;height:1px;background:#8a8a8a"></div><div class="a" style="left:615px;top:871px;width:100px;height:1px;background:#8a8a8a"></div><div class="a" style="left:721px;top:871px;width:12px;height:1px;background:#8a8a8a"></div>
<div class="a cmd" style="left:16px;top:852px">Command:</div>
<div class="a cmd" style="left:16px;top:874px">Command: _xline Specify a point or [Hor/Ver/Ang/Bisect/Offset]:</div>
<div class="a" style="left:0;top:889px;width:1200px;height:1px;background:#c0c0c0"></div>
<div class="a" style="left:0;top:890px;width:1200px;height:1px;background:#fff"></div>
<!-- status bar -->
<div class="sp" style="left:4px;width:110px"><span style="left:1px;font-size:10px;letter-spacing:-0.3px">447.4191, 257.5564</span></div>
<div class="sb" style="left:117px;width:29px"><span>SNAP</span></div>
<div class="sb" style="left:149px;width:27px"><span>GRID</span></div>
<div class="sp" style="left:179px;width:38px"><span>ORTHO</span></div>
<div class="sb" style="left:220px;width:35px"><span>POLAR</span></div>
<div class="sb" style="left:258px;width:36px"><span>OSNAP</span></div>
<div class="sb" style="left:297px;width:42px"><span>OTRACK</span></div>
<div class="sb" style="left:342px;width:24px"><span>DYN</span></div>
<div class="sb" style="left:369px;width:24px"><span>LWT</span></div>
<div class="sp" style="left:397px;width:36px"><span>MODEL</span></div>
<svg id="draw" width="1200" height="900" style="font-family:'Liberation Sans',sans-serif;font-size:12px;will-change:transform" shape-rendering="crispEdges">
<g fill="#d6d6d6" style="shape-rendering:auto">
</g>
<rect x="405.5" y="397.5" width="461.0" height="212.0" fill="none" stroke="#1a1ab0"/>
<rect x="375.5" y="455.5" width="30.0" height="87.0" fill="none" stroke="#1a1ab0"/>
<line x1="399.5" y1="455.5" x2="399.5" y2="542.5" stroke="#1a1ab0"/>
<line x1="402.5" y1="455.5" x2="402.5" y2="542.5" stroke="#1a1ab0"/>
<rect x="838.5" y="397.5" width="32.0" height="56.0" fill="none" stroke="#1a1ab0"/>
<rect x="838.5" y="493.5" width="32.0" height="49.0" fill="none" stroke="#1a1ab0"/>
<circle cx="387" cy="472.5" r="4.8" fill="#06063a" stroke="#1a1ab0" stroke-width="1.2" shape-rendering="auto"/>
<circle cx="387" cy="472.5" r="1.6" fill="none" stroke="#4848ff" shape-rendering="auto"/>
<circle cx="387" cy="528.5" r="4.8" fill="#06063a" stroke="#1a1ab0" stroke-width="1.2" shape-rendering="auto"/>
<circle cx="387" cy="528.5" r="1.6" fill="none" stroke="#4848ff" shape-rendering="auto"/>
<circle cx="850.5" cy="408.5" r="4.8" fill="#06063a" stroke="#1a1ab0" stroke-width="1.2" shape-rendering="auto"/>
<circle cx="850.5" cy="408.5" r="1.6" fill="none" stroke="#4848ff" shape-rendering="auto"/>
<circle cx="851" cy="528" r="4.8" fill="#06063a" stroke="#1a1ab0" stroke-width="1.2" shape-rendering="auto"/>
<circle cx="851" cy="528" r="1.6" fill="none" stroke="#4848ff" shape-rendering="auto"/>
<rect x="412.75" y="408.5" width="8.5" height="31.0" rx="3.6" ry="4.2" fill="none" stroke="#1a1ab0" shape-rendering="auto"/>
<rect x="412.75" y="543.5" width="8.5" height="31.5" rx="3.6" ry="4.2" fill="none" stroke="#1a1ab0" shape-rendering="auto"/>
<rect x="593.75" y="408.5" width="8.5" height="31.0" rx="3.6" ry="4.2" fill="none" stroke="#1a1ab0" shape-rendering="auto"/>
<rect x="593.75" y="543.5" width="8.5" height="31.5" rx="3.6" ry="4.2" fill="none" stroke="#1a1ab0" shape-rendering="auto"/>
<rect x="653.75" y="408.5" width="8.5" height="31.0" rx="3.6" ry="4.2" fill="none" stroke="#1a1ab0" shape-rendering="auto"/>
<rect x="653.75" y="543.5" width="8.5" height="31.5" rx="3.6" ry="4.2" fill="none" stroke="#1a1ab0" shape-rendering="auto"/>
<rect x="835.25" y="408.5" width="8.5" height="31.0" rx="3.6" ry="4.2" fill="none" stroke="#1a1ab0" shape-rendering="auto"/>
<rect x="835.25" y="543.5" width="8.5" height="31.5" rx="3.6" ry="4.2" fill="none" stroke="#1a1ab0" shape-rendering="auto"/>
<line x1="387" y1="239.5" x2="602" y2="239.5" stroke="#e6e6e6" />
<line x1="652.75" y1="239.5" x2="850" y2="239.5" stroke="#e6e6e6" />
<g fill="none" stroke="#d6d6d6" stroke-width="1.05" stroke-linejoin="round" shape-rendering="auto"><path transform="translate(603.50,236.25) scale(1,0.88)" d="M0,1.5 L1,0 H4.5 L5.5,1.5 V3.5 L0,8.5 V9 H5.5" vector-effect="non-scaling-stroke"/><path transform="translate(610.90,236.25) scale(1,0.88)" d="M4.5,9 V0 L0,6 H6" vector-effect="non-scaling-stroke"/><path transform="translate(618.70,236.25) scale(1,0.88)" d="M1,0 H3.5 L4.5,1.5 V7.5 L3.5,9 H1 L0,7.5 V1.5 Z" vector-effect="non-scaling-stroke"/><path transform="translate(625.10,236.25) scale(1,0.88)" d="M0.1,8.3 H1.3 V9 H0.1 Z" vector-effect="non-scaling-stroke"/><path transform="translate(628.10,236.25) scale(1,0.88)" d="M1,0 H3.5 L4.5,1.5 V7.5 L3.5,9 H1 L0,7.5 V1.5 Z" vector-effect="non-scaling-stroke"/><path transform="translate(634.50,236.25) scale(1,0.88)" d="M1,0 H3.5 L4.5,1.5 V7.5 L3.5,9 H1 L0,7.5 V1.5 Z" vector-effect="non-scaling-stroke"/><path transform="translate(640.90,236.25) scale(1,0.88)" d="M1,0 H3.5 L4.5,1.5 V7.5 L3.5,9 H1 L0,7.5 V1.5 Z" vector-effect="non-scaling-stroke"/><path transform="translate(647.30,236.25) scale(1,0.88)" d="M1,0 H3.5 L4.5,1.5 V7.5 L3.5,9 H1 L0,7.5 V1.5 Z" vector-effect="non-scaling-stroke"/></g>
<polygon points="388.50,238.90 391.00,237.60 395.00,237.60 395.00,241.40 391.00,241.40 388.50,240.10" fill="#e6e6e6" shape-rendering="auto"/>
<polygon points="848.50,238.90 846.00,237.60 842.00,237.60 842.00,241.40 846.00,241.40 848.50,240.10" fill="#e6e6e6" shape-rendering="auto"/>
<line x1="405" y1="267.5" x2="601.8" y2="267.5" stroke="#e6e6e6" />
<line x1="653.8" y1="267.5" x2="850" y2="267.5" stroke="#e6e6e6" />
<g fill="none" stroke="#d6d6d6" stroke-width="1.05" stroke-linejoin="round" shape-rendering="auto"><path transform="translate(603.30,263.70) scale(1,0.88)" d="M0,1.5 L1,0 H4.5 L5.5,1.5 V3.5 L0,8.5 V9 H5.5" vector-effect="non-scaling-stroke"/><path transform="translate(610.70,263.70) scale(1,0.88)" d="M0,0 H5 L2.5,3.5 H3.5 L5,5 V7.5 L3.5,9 H1.5 L0,7.5" vector-effect="non-scaling-stroke"/><path transform="translate(617.90,263.70) scale(1,0.88)" d="M1,0 H3.5 L4.5,1.5 V7.5 L3.5,9 H1 L0,7.5 V1.5 Z" vector-effect="non-scaling-stroke"/><path transform="translate(624.30,263.70) scale(1,0.88)" d="M0.1,8.3 H1.3 V9 H0.1 Z" vector-effect="non-scaling-stroke"/><path transform="translate(627.30,263.70) scale(1,0.88)" d="M1,0 H3.5 L4.5,1 V3 L3.5,4 H1 L0,5 V8 L1,9 H3.5 L4.5,8 V5 L3.5,4 M1,4 L0,3 V1 L1,0" vector-effect="non-scaling-stroke"/><path transform="translate(634.20,263.70) scale(1,0.88)" d="M1,0 H3.5 L4.5,1.5 V7.5 L3.5,9 H1 L0,7.5 V1.5 Z" vector-effect="non-scaling-stroke"/><path transform="translate(640.60,263.70) scale(1,0.88)" d="M1,0 H3.5 L4.5,1.5 V7.5 L3.5,9 H1 L0,7.5 V1.5 Z" vector-effect="non-scaling-stroke"/><path transform="translate(647.00,263.70) scale(1,0.88)" d="M1,0 H3.5 L4.5,1.5 V7.5 L3.5,9 H1 L0,7.5 V1.5 Z" vector-effect="non-scaling-stroke"/></g>
<polygon points="406.50,266.90 409.00,265.60 413.00,265.60 413.00,269.40 409.00,269.40 406.50,268.10" fill="#e6e6e6" shape-rendering="auto"/>
<polygon points="848.50,266.90 846.00,265.60 842.00,265.60 842.00,269.40 846.00,269.40 848.50,268.10" fill="#e6e6e6" shape-rendering="auto"/>
<line x1="405" y1="293.5" x2="595" y2="293.5" stroke="#e6e6e6" />
<line x1="648.6" y1="293.5" x2="838" y2="293.5" stroke="#e6e6e6" />
<g fill="none" stroke="#d6d6d6" stroke-width="1.05" stroke-linejoin="round" shape-rendering="auto"><path transform="translate(596.50,289.30) scale(1,0.88)" d="M0,1.5 L1,0 H4.5 L5.5,1.5 V3.5 L0,8.5 V9 H5.5" vector-effect="non-scaling-stroke"/><path transform="translate(603.90,289.30) scale(1,0.88)" d="M0,1.5 L1,0 H4.5 L5.5,1.5 V3.5 L0,8.5 V9 H5.5" vector-effect="non-scaling-stroke"/><path transform="translate(611.30,289.30) scale(1,0.88)" d="M4.5,9 V0 L0,6 H6" vector-effect="non-scaling-stroke"/><path transform="translate(619.10,289.30) scale(1,0.88)" d="M0.1,8.3 H1.3 V9 H0.1 Z" vector-effect="non-scaling-stroke"/><path transform="translate(622.10,289.30) scale(1,0.88)" d="M4.5,1 L3.5,0 H1 L0,1.5 V7.5 L1,9 H3.5 L4.5,7.5 V5.5 L3.5,4.5 H1 L0,5.5" vector-effect="non-scaling-stroke"/><path transform="translate(629.00,289.30) scale(1,0.88)" d="M1,0 H3.5 L4.5,1.5 V7.5 L3.5,9 H1 L0,7.5 V1.5 Z" vector-effect="non-scaling-stroke"/><path transform="translate(635.40,289.30) scale(1,0.88)" d="M1,0 H3.5 L4.5,1.5 V7.5 L3.5,9 H1 L0,7.5 V1.5 Z" vector-effect="non-scaling-stroke"/><path transform="translate(641.80,289.30) scale(1,0.88)" d="M1,0 H3.5 L4.5,1.5 V7.5 L3.5,9 H1 L0,7.5 V1.5 Z" vector-effect="non-scaling-stroke"/></g>
<polygon points="406.50,292.90 409.00,291.60 413.00,291.60 413.00,295.40 409.00,295.40 406.50,294.10" fill="#e6e6e6" shape-rendering="auto"/>
<polygon points="836.50,292.90 834.00,291.60 830.00,291.60 830.00,295.40 834.00,295.40 836.50,294.10" fill="#e6e6e6" shape-rendering="auto"/>
<line x1="405" y1="320.5" x2="601" y2="320.5" stroke="#e6e6e6" />
<line x1="655" y1="320.5" x2="840" y2="320.5" stroke="#e6e6e6" />
<g fill="none" stroke="#d6d6d6" stroke-width="1.05" stroke-linejoin="round" shape-rendering="auto"><path transform="translate(602.50,316.50) scale(1,0.88)" d="M0,1.5 L1,0 H4.5 L5.5,1.5 V3.5 L0,8.5 V9 H5.5" vector-effect="non-scaling-stroke"/><path transform="translate(609.90,316.50) scale(1,0.88)" d="M0,1.5 L1,0 H4.5 L5.5,1.5 V3.5 L0,8.5 V9 H5.5" vector-effect="non-scaling-stroke"/><path transform="translate(617.30,316.50) scale(1,0.88)" d="M5,0 H0.5 L0,4 H3.5 L5,5.5 V7.5 L3.5,9 H1 L0,7.5" vector-effect="non-scaling-stroke"/><path transform="translate(624.50,316.50) scale(1,0.88)" d="M0.1,8.3 H1.3 V9 H0.1 Z" vector-effect="non-scaling-stroke"/><path transform="translate(627.50,316.50) scale(1,0.88)" d="M0,1.5 L1,0 H4.5 L5.5,1.5 V3.5 L0,8.5 V9 H5.5" vector-effect="non-scaling-stroke"/><path transform="translate(634.90,316.50) scale(1,0.88)" d="M1,0 H3.5 L4.5,1.5 V7.5 L3.5,9 H1 L0,7.5 V1.5 Z" vector-effect="non-scaling-stroke"/><path transform="translate(641.30,316.50) scale(1,0.88)" d="M1,0 H3.5 L4.5,1.5 V7.5 L3.5,9 H1 L0,7.5 V1.5 Z" vector-effect="non-scaling-stroke"/><path transform="translate(647.70,316.50) scale(1,0.88)" d="M1,0 H3.5 L4.5,1.5 V7.5 L3.5,9 H1 L0,7.5 V1.5 Z" vector-effect="non-scaling-stroke"/></g>
<polygon points="406.50,319.90 409.00,318.60 413.00,318.60 413.00,322.40 409.00,322.40 406.50,321.10" fill="#e6e6e6" shape-rendering="auto"/>
<polygon points="838.50,319.90 836.00,318.60 832.00,318.60 832.00,322.40 836.00,322.40 838.50,321.10" fill="#e6e6e6" shape-rendering="auto"/>
<line x1="405" y1="336.5" x2="507.5" y2="336.5" stroke="#e6e6e6" />
<line x1="555.5" y1="336.5" x2="658" y2="336.5" stroke="#e6e6e6" />
<g fill="none" stroke="#d6d6d6" stroke-width="1.05" stroke-linejoin="round" shape-rendering="auto"><path transform="translate(509.00,333.20) scale(1,0.88)" d="M0,1.5 L1.5,0 V9 M0,9 H3" vector-effect="non-scaling-stroke"/><path transform="translate(514.20,333.20) scale(1,0.88)" d="M0,0 H5 L2.5,3.5 H3.5 L5,5 V7.5 L3.5,9 H1.5 L0,7.5" vector-effect="non-scaling-stroke"/><path transform="translate(521.40,333.20) scale(1,0.88)" d="M0,1.5 L1.5,0 V9 M0,9 H3" vector-effect="non-scaling-stroke"/><path transform="translate(526.60,333.20) scale(1,0.88)" d="M0.1,8.3 H1.3 V9 H0.1 Z" vector-effect="non-scaling-stroke"/><path transform="translate(529.60,333.20) scale(1,0.88)" d="M0,1.5 L1,0 H4.5 L5.5,1.5 V3.5 L0,8.5 V9 H5.5" vector-effect="non-scaling-stroke"/><path transform="translate(537.00,333.20) scale(1,0.88)" d="M1,0 H3.5 L4.5,1.5 V7.5 L3.5,9 H1 L0,7.5 V1.5 Z" vector-effect="non-scaling-stroke"/><path transform="translate(543.40,333.20) scale(1,0.88)" d="M1,0 H3.5 L4.5,1.5 V7.5 L3.5,9 H1 L0,7.5 V1.5 Z" vector-effect="non-scaling-stroke"/><path transform="translate(549.80,333.20) scale(1,0.88)" d="M1,0 H3.5 L4.5,1.5 V7.5 L3.5,9 H1 L0,7.5 V1.5 Z" vector-effect="non-scaling-stroke"/></g>
<polygon points="406.50,335.90 409.00,334.60 413.00,334.60 413.00,338.40 409.00,338.40 406.50,337.10" fill="#e6e6e6" shape-rendering="auto"/>
<polygon points="656.50,335.90 654.00,334.60 650.00,334.60 650.00,338.40 654.00,338.40 656.50,337.10" fill="#e6e6e6" shape-rendering="auto"/>
<line x1="405" y1="362.5" x2="477.25" y2="362.5" stroke="#e6e6e6" />
<line x1="525.25" y1="362.5" x2="598" y2="362.5" stroke="#e6e6e6" />
<g fill="none" stroke="#d6d6d6" stroke-width="1.05" stroke-linejoin="round" shape-rendering="auto"><path transform="translate(478.75,358.50) scale(1,0.88)" d="M0,1.5 L1.5,0 V9 M0,9 H3" vector-effect="non-scaling-stroke"/><path transform="translate(483.95,358.50) scale(1,0.88)" d="M1,0 H3.5 L4.5,1.5 V7.5 L3.5,9 H1 L0,7.5 V1.5 Z" vector-effect="non-scaling-stroke"/><path transform="translate(490.35,358.50) scale(1,0.88)" d="M1,0 H3.5 L4.5,1.5 V7.5 L3.5,9 H1 L0,7.5 V1.5 Z" vector-effect="non-scaling-stroke"/><path transform="translate(496.75,358.50) scale(1,0.88)" d="M0.1,8.3 H1.3 V9 H0.1 Z" vector-effect="non-scaling-stroke"/><path transform="translate(499.75,358.50) scale(1,0.88)" d="M0,1.5 L1,0 H4.5 L5.5,1.5 V3.5 L0,8.5 V9 H5.5" vector-effect="non-scaling-stroke"/><path transform="translate(507.15,358.50) scale(1,0.88)" d="M1,0 H3.5 L4.5,1.5 V7.5 L3.5,9 H1 L0,7.5 V1.5 Z" vector-effect="non-scaling-stroke"/><path transform="translate(513.55,358.50) scale(1,0.88)" d="M1,0 H3.5 L4.5,1.5 V7.5 L3.5,9 H1 L0,7.5 V1.5 Z" vector-effect="non-scaling-stroke"/><path transform="translate(519.95,358.50) scale(1,0.88)" d="M1,0 H3.5 L4.5,1.5 V7.5 L3.5,9 H1 L0,7.5 V1.5 Z" vector-effect="non-scaling-stroke"/></g>
<polygon points="406.50,361.90 409.00,360.60 413.00,360.60 413.00,364.40 409.00,364.40 406.50,363.10" fill="#e6e6e6" shape-rendering="auto"/>
<polygon points="596.50,361.90 594.00,360.60 590.00,360.60 590.00,364.40 594.00,364.40 596.50,363.10" fill="#e6e6e6" shape-rendering="auto"/>
<line x1="387.5" y1="237" x2="387.5" y2="465" stroke="#e6e6e6" />
<line x1="387.5" y1="510" x2="387.5" y2="521" stroke="#e6e6e6" />
<line x1="850.5" y1="237" x2="850.5" y2="408" stroke="#e6e6e6" />
<line x1="405.5" y1="265" x2="405.5" y2="397" stroke="#e6e6e6" />
<line x1="405.5" y1="443" x2="405.5" y2="456" stroke="#e6e6e6" />
<line x1="405.5" y1="542" x2="405.5" y2="581" stroke="#e6e6e6" />
<line x1="838.5" y1="291" x2="838.5" y2="397" stroke="#e6e6e6" />
<line x1="840.5" y1="318" x2="840.5" y2="424" stroke="#e6e6e6" />
<line x1="658.5" y1="334" x2="658.5" y2="424" stroke="#e6e6e6" />
<line x1="598.5" y1="360" x2="598.5" y2="424" stroke="#e6e6e6" />
<line x1="416.5" y1="381" x2="416.5" y2="424" stroke="#e6e6e6" />
<line x1="416.5" y1="510" x2="416.5" y2="559" stroke="#e6e6e6" />
<line x1="375.5" y1="542" x2="375.5" y2="581" stroke="#e6e6e6" />
<line x1="840.5" y1="559" x2="840.5" y2="582" stroke="#e6e6e6" />
<line x1="866.5" y1="609" x2="866.5" y2="630" stroke="#e6e6e6" />
<line x1="405.5" y1="609" x2="405.5" y2="630" stroke="#e6e6e6" />
<line x1="866.5" y1="344" x2="866.5" y2="349" stroke="#e6e6e6" />
<line x1="866.5" y1="350.5" x2="866.5" y2="355" stroke="#e6e6e6" />
<line x1="866.5" y1="357" x2="866.5" y2="361.5" stroke="#e6e6e6" />
<line x1="866.5" y1="363" x2="866.5" y2="397" stroke="#e6e6e6" />
<line x1="221" y1="397.5" x2="405" y2="397.5" stroke="#e6e6e6" />
<line x1="248" y1="424.5" x2="472" y2="424.5" stroke="#e6e6e6" />
<line x1="273" y1="455.5" x2="375" y2="455.5" stroke="#e6e6e6" />
<line x1="302" y1="472.5" x2="387" y2="472.5" stroke="#e6e6e6" />
<line x1="329" y1="528.5" x2="387" y2="528.5" stroke="#e6e6e6" />
<line x1="356" y1="542.5" x2="375" y2="542.5" stroke="#e6e6e6" />
<line x1="416" y1="559.5" x2="472" y2="559.5" stroke="#e6e6e6" />
<line x1="221" y1="609.5" x2="405" y2="609.5" stroke="#e6e6e6" />
<line x1="850" y1="408.5" x2="1095" y2="408.5" stroke="#e6e6e6" />
<line x1="871" y1="453.5" x2="1064" y2="453.5" stroke="#e6e6e6" />
<line x1="871" y1="493.5" x2="1035" y2="493.5" stroke="#e6e6e6" />
<line x1="851" y1="528.5" x2="1004" y2="528.5" stroke="#e6e6e6" />
<line x1="871" y1="542.5" x2="972" y2="542.5" stroke="#e6e6e6" />
<line x1="836" y1="559.5" x2="914" y2="559.5" stroke="#e6e6e6" />
<line x1="866" y1="609.5" x2="1095" y2="609.5" stroke="#e6e6e6" />
<line x1="221.5" y1="397" x2="221.5" y2="609" stroke="#e6e6e6" />
<polygon points="220.90,398.50 219.60,401.00 219.60,405.00 223.40,405.00 223.40,401.00 222.10,398.50" fill="#e6e6e6" shape-rendering="auto"/>
<polygon points="220.90,607.50 219.60,605.00 219.60,601.00 223.40,601.00 223.40,605.00 222.10,607.50" fill="#e6e6e6" shape-rendering="auto"/>
<g fill="none" stroke="#d6d6d6" stroke-width="1.05" stroke-linejoin="round" shape-rendering="auto"><path transform="translate(199.20,515.50) scale(1,0.88)" d="M0,1.5 L1.5,0 V9 M0,9 H3" vector-effect="non-scaling-stroke"/><path transform="translate(204.40,515.50) scale(1,0.88)" d="M0,1.5 L1.5,0 V9 M0,9 H3" vector-effect="non-scaling-stroke"/><path transform="translate(209.60,515.50) scale(1,0.88)" d="M1,0 H3.5 L4.5,1.5 V7.5 L3.5,9 H1 L0,7.5 V1.5 Z" vector-effect="non-scaling-stroke"/><path transform="translate(216.00,515.50) scale(1,0.88)" d="M0.1,8.3 H1.3 V9 H0.1 Z" vector-effect="non-scaling-stroke"/><path transform="translate(219.00,515.50) scale(1,0.88)" d="M1,0 H3.5 L4.5,1.5 V7.5 L3.5,9 H1 L0,7.5 V1.5 Z" vector-effect="non-scaling-stroke"/><path transform="translate(225.40,515.50) scale(1,0.88)" d="M1,0 H3.5 L4.5,1.5 V7.5 L3.5,9 H1 L0,7.5 V1.5 Z" vector-effect="non-scaling-stroke"/><path transform="translate(231.80,515.50) scale(1,0.88)" d="M1,0 H3.5 L4.5,1.5 V7.5 L3.5,9 H1 L0,7.5 V1.5 Z" vector-effect="non-scaling-stroke"/><path transform="translate(238.20,515.50) scale(1,0.88)" d="M1,0 H3.5 L4.5,1.5 V7.5 L3.5,9 H1 L0,7.5 V1.5 Z" vector-effect="non-scaling-stroke"/></g>
<line x1="248.5" y1="424" x2="248.5" y2="609" stroke="#e6e6e6" />
<polygon points="247.90,425.50 246.60,428.00 246.60,432.00 250.40,432.00 250.40,428.00 249.10,425.50" fill="#e6e6e6" shape-rendering="auto"/>
<polygon points="247.90,607.50 246.60,605.00 246.60,601.00 250.40,601.00 250.40,605.00 249.10,607.50" fill="#e6e6e6" shape-rendering="auto"/>
<g fill="none" stroke="#d6d6d6" stroke-width="1.05" stroke-linejoin="round" shape-rendering="auto"><path transform="translate(228.50,530.00) scale(1,0.88)" d="M4.5,4 L3.5,5 H1 L0,4 V1.5 L1,0 H3.5 L4.5,1.5 V7.5 L3.5,9 H1 L0,8" vector-effect="non-scaling-stroke"/><path transform="translate(235.40,530.00) scale(1,0.88)" d="M4.5,1 L3.5,0 H1 L0,1.5 V7.5 L1,9 H3.5 L4.5,7.5 V5.5 L3.5,4.5 H1 L0,5.5" vector-effect="non-scaling-stroke"/><path transform="translate(242.30,530.00) scale(1,0.88)" d="M0.1,8.3 H1.3 V9 H0.1 Z" vector-effect="non-scaling-stroke"/><path transform="translate(245.30,530.00) scale(1,0.88)" d="M1,0 H3.5 L4.5,1.5 V7.5 L3.5,9 H1 L0,7.5 V1.5 Z" vector-effect="non-scaling-stroke"/><path transform="translate(251.70,530.00) scale(1,0.88)" d="M1,0 H3.5 L4.5,1.5 V7.5 L3.5,9 H1 L0,7.5 V1.5 Z" vector-effect="non-scaling-stroke"/><path transform="translate(258.10,530.00) scale(1,0.88)" d="M1,0 H3.5 L4.5,1.5 V7.5 L3.5,9 H1 L0,7.5 V1.5 Z" vector-effect="non-scaling-stroke"/><path transform="translate(264.50,530.00) scale(1,0.88)" d="M1,0 H3.5 L4.5,1.5 V7.5 L3.5,9 H1 L0,7.5 V1.5 Z" vector-effect="non-scaling-stroke"/></g>
<line x1="273.5" y1="455" x2="273.5" y2="609" stroke="#e6e6e6" />
<polygon points="272.90,456.50 271.60,459.00 271.60,463.00 275.40,463.00 275.40,459.00 274.10,456.50" fill="#e6e6e6" shape-rendering="auto"/>
<polygon points="272.90,607.50 271.60,605.00 271.60,601.00 275.40,601.00 275.40,605.00 274.10,607.50" fill="#e6e6e6" shape-rendering="auto"/>
<g fill="none" stroke="#d6d6d6" stroke-width="1.05" stroke-linejoin="round" shape-rendering="auto"><path transform="translate(253.60,543.40) scale(1,0.88)" d="M1,0 H3.5 L4.5,1 V3 L3.5,4 H1 L0,5 V8 L1,9 H3.5 L4.5,8 V5 L3.5,4 M1,4 L0,3 V1 L1,0" vector-effect="non-scaling-stroke"/><path transform="translate(260.50,543.40) scale(1,0.88)" d="M1,0 H3.5 L4.5,1.5 V7.5 L3.5,9 H1 L0,7.5 V1.5 Z" vector-effect="non-scaling-stroke"/><path transform="translate(266.90,543.40) scale(1,0.88)" d="M0.1,8.3 H1.3 V9 H0.1 Z" vector-effect="non-scaling-stroke"/><path transform="translate(269.90,543.40) scale(1,0.88)" d="M1,0 H3.5 L4.5,1.5 V7.5 L3.5,9 H1 L0,7.5 V1.5 Z" vector-effect="non-scaling-stroke"/><path transform="translate(276.30,543.40) scale(1,0.88)" d="M1,0 H3.5 L4.5,1.5 V7.5 L3.5,9 H1 L0,7.5 V1.5 Z" vector-effect="non-scaling-stroke"/><path transform="translate(282.70,543.40) scale(1,0.88)" d="M1,0 H3.5 L4.5,1.5 V7.5 L3.5,9 H1 L0,7.5 V1.5 Z" vector-effect="non-scaling-stroke"/><path transform="translate(289.10,543.40) scale(1,0.88)" d="M1,0 H3.5 L4.5,1.5 V7.5 L3.5,9 H1 L0,7.5 V1.5 Z" vector-effect="non-scaling-stroke"/></g>
<line x1="302.5" y1="472" x2="302.5" y2="609" stroke="#e6e6e6" />
<polygon points="301.90,473.50 300.60,476.00 300.60,480.00 304.40,480.00 304.40,476.00 303.10,473.50" fill="#e6e6e6" shape-rendering="auto"/>
<polygon points="301.90,607.50 300.60,605.00 300.60,601.00 304.40,601.00 304.40,605.00 303.10,607.50" fill="#e6e6e6" shape-rendering="auto"/>
<g fill="none" stroke="#d6d6d6" stroke-width="1.05" stroke-linejoin="round" shape-rendering="auto"><path transform="translate(283.50,557.50) scale(1,0.88)" d="M0,0 H5.5 L1.5,9" vector-effect="non-scaling-stroke"/><path transform="translate(290.70,557.50) scale(1,0.88)" d="M0,1.5 L1.5,0 V9 M0,9 H3" vector-effect="non-scaling-stroke"/><path transform="translate(295.90,557.50) scale(1,0.88)" d="M0.1,8.3 H1.3 V9 H0.1 Z" vector-effect="non-scaling-stroke"/><path transform="translate(298.90,557.50) scale(1,0.88)" d="M1,0 H3.5 L4.5,1.5 V7.5 L3.5,9 H1 L0,7.5 V1.5 Z" vector-effect="non-scaling-stroke"/><path transform="translate(305.30,557.50) scale(1,0.88)" d="M1,0 H3.5 L4.5,1.5 V7.5 L3.5,9 H1 L0,7.5 V1.5 Z" vector-effect="non-scaling-stroke"/><path transform="translate(311.70,557.50) scale(1,0.88)" d="M1,0 H3.5 L4.5,1.5 V7.5 L3.5,9 H1 L0,7.5 V1.5 Z" vector-effect="non-scaling-stroke"/><path transform="translate(318.10,557.50) scale(1,0.88)" d="M1,0 H3.5 L4.5,1.5 V7.5 L3.5,9 H1 L0,7.5 V1.5 Z" vector-effect="non-scaling-stroke"/></g>
<line x1="329.5" y1="528" x2="329.5" y2="609" stroke="#e6e6e6" />
<polygon points="328.90,529.50 327.60,532.00 327.60,536.00 331.40,536.00 331.40,532.00 330.10,529.50" fill="#e6e6e6" shape-rendering="auto"/>
<polygon points="328.90,607.50 327.60,605.00 327.60,601.00 331.40,601.00 331.40,605.00 330.10,607.50" fill="#e6e6e6" shape-rendering="auto"/>
<g fill="none" stroke="#d6d6d6" stroke-width="1.05" stroke-linejoin="round" shape-rendering="auto"><path transform="translate(309.25,571.70) scale(1,0.88)" d="M4.5,9 V0 L0,6 H6" vector-effect="non-scaling-stroke"/><path transform="translate(317.05,571.70) scale(1,0.88)" d="M0,1.5 L1,0 H4.5 L5.5,1.5 V3.5 L0,8.5 V9 H5.5" vector-effect="non-scaling-stroke"/><path transform="translate(324.45,571.70) scale(1,0.88)" d="M0.1,8.3 H1.3 V9 H0.1 Z" vector-effect="non-scaling-stroke"/><path transform="translate(327.45,571.70) scale(1,0.88)" d="M1,0 H3.5 L4.5,1.5 V7.5 L3.5,9 H1 L0,7.5 V1.5 Z" vector-effect="non-scaling-stroke"/><path transform="translate(333.85,571.70) scale(1,0.88)" d="M1,0 H3.5 L4.5,1.5 V7.5 L3.5,9 H1 L0,7.5 V1.5 Z" vector-effect="non-scaling-stroke"/><path transform="translate(340.25,571.70) scale(1,0.88)" d="M1,0 H3.5 L4.5,1.5 V7.5 L3.5,9 H1 L0,7.5 V1.5 Z" vector-effect="non-scaling-stroke"/><path transform="translate(346.65,571.70) scale(1,0.88)" d="M1,0 H3.5 L4.5,1.5 V7.5 L3.5,9 H1 L0,7.5 V1.5 Z" vector-effect="non-scaling-stroke"/></g>
<line x1="356.5" y1="542" x2="356.5" y2="609" stroke="#e6e6e6" />
<polygon points="355.90,543.50 354.60,546.00 354.60,550.00 358.40,550.00 358.40,546.00 357.10,543.50" fill="#e6e6e6" shape-rendering="auto"/>
<polygon points="355.90,607.50 354.60,605.00 354.60,601.00 358.40,601.00 358.40,605.00 357.10,607.50" fill="#e6e6e6" shape-rendering="auto"/>
<g fill="none" stroke="#d6d6d6" stroke-width="1.05" stroke-linejoin="round" shape-rendering="auto"><path transform="translate(335.90,585.00) scale(1,0.88)" d="M0,0 H5 L2.5,3.5 H3.5 L5,5 V7.5 L3.5,9 H1.5 L0,7.5" vector-effect="non-scaling-stroke"/><path transform="translate(343.10,585.00) scale(1,0.88)" d="M5,0 H0.5 L0,4 H3.5 L5,5.5 V7.5 L3.5,9 H1 L0,7.5" vector-effect="non-scaling-stroke"/><path transform="translate(350.30,585.00) scale(1,0.88)" d="M0.1,8.3 H1.3 V9 H0.1 Z" vector-effect="non-scaling-stroke"/><path transform="translate(353.30,585.00) scale(1,0.88)" d="M1,0 H3.5 L4.5,1.5 V7.5 L3.5,9 H1 L0,7.5 V1.5 Z" vector-effect="non-scaling-stroke"/><path transform="translate(359.70,585.00) scale(1,0.88)" d="M1,0 H3.5 L4.5,1.5 V7.5 L3.5,9 H1 L0,7.5 V1.5 Z" vector-effect="non-scaling-stroke"/><path transform="translate(366.10,585.00) scale(1,0.88)" d="M1,0 H3.5 L4.5,1.5 V7.5 L3.5,9 H1 L0,7.5 V1.5 Z" vector-effect="non-scaling-stroke"/><path transform="translate(372.50,585.00) scale(1,0.88)" d="M1,0 H3.5 L4.5,1.5 V7.5 L3.5,9 H1 L0,7.5 V1.5 Z" vector-effect="non-scaling-stroke"/></g>
<line x1="471.5" y1="424" x2="471.5" y2="559" stroke="#e6e6e6" />
<polygon points="470.90,425.50 469.60,428.00 469.60,432.00 473.40,432.00 473.40,428.00 472.10,425.50" fill="#e6e6e6" shape-rendering="auto"/>
<polygon points="470.90,557.50 469.60,555.00 469.60,551.00 473.40,551.00 473.40,555.00 472.10,557.50" fill="#e6e6e6" shape-rendering="auto"/>
<g fill="none" stroke="#d6d6d6" stroke-width="1.05" stroke-linejoin="round" shape-rendering="auto"><path transform="translate(451.10,488.50) scale(1,0.88)" d="M0,0 H5.5 L1.5,9" vector-effect="non-scaling-stroke"/><path transform="translate(458.30,488.50) scale(1,0.88)" d="M1,0 H3.5 L4.5,1.5 V7.5 L3.5,9 H1 L0,7.5 V1.5 Z" vector-effect="non-scaling-stroke"/><path transform="translate(464.70,488.50) scale(1,0.88)" d="M0.1,8.3 H1.3 V9 H0.1 Z" vector-effect="non-scaling-stroke"/><path transform="translate(467.70,488.50) scale(1,0.88)" d="M1,0 H3.5 L4.5,1.5 V7.5 L3.5,9 H1 L0,7.5 V1.5 Z" vector-effect="non-scaling-stroke"/><path transform="translate(474.10,488.50) scale(1,0.88)" d="M1,0 H3.5 L4.5,1.5 V7.5 L3.5,9 H1 L0,7.5 V1.5 Z" vector-effect="non-scaling-stroke"/><path transform="translate(480.50,488.50) scale(1,0.88)" d="M1,0 H3.5 L4.5,1.5 V7.5 L3.5,9 H1 L0,7.5 V1.5 Z" vector-effect="non-scaling-stroke"/><path transform="translate(486.90,488.50) scale(1,0.88)" d="M1,0 H3.5 L4.5,1.5 V7.5 L3.5,9 H1 L0,7.5 V1.5 Z" vector-effect="non-scaling-stroke"/></g>
<line x1="1095.5" y1="408" x2="1095.5" y2="609" stroke="#e6e6e6" />
<polygon points="1094.90,409.50 1093.60,412.00 1093.60,416.00 1097.40,416.00 1097.40,412.00 1096.10,409.50" fill="#e6e6e6" shape-rendering="auto"/>
<polygon points="1094.90,607.50 1093.60,605.00 1093.60,601.00 1097.40,601.00 1097.40,605.00 1096.10,607.50" fill="#e6e6e6" shape-rendering="auto"/>
<g fill="none" stroke="#d6d6d6" stroke-width="1.05" stroke-linejoin="round" shape-rendering="auto"><path transform="translate(1072.30,526.25) scale(1,0.88)" d="M0,1.5 L1.5,0 V9 M0,9 H3" vector-effect="non-scaling-stroke"/><path transform="translate(1077.50,526.25) scale(1,0.88)" d="M1,0 H3.5 L4.5,1.5 V7.5 L3.5,9 H1 L0,7.5 V1.5 Z" vector-effect="non-scaling-stroke"/><path transform="translate(1083.90,526.25) scale(1,0.88)" d="M4.5,9 V0 L0,6 H6" vector-effect="non-scaling-stroke"/><path transform="translate(1091.70,526.25) scale(1,0.88)" d="M0.1,8.3 H1.3 V9 H0.1 Z" vector-effect="non-scaling-stroke"/><path transform="translate(1094.70,526.25) scale(1,0.88)" d="M1,0 H3.5 L4.5,1.5 V7.5 L3.5,9 H1 L0,7.5 V1.5 Z" vector-effect="non-scaling-stroke"/><path transform="translate(1101.10,526.25) scale(1,0.88)" d="M1,0 H3.5 L4.5,1.5 V7.5 L3.5,9 H1 L0,7.5 V1.5 Z" vector-effect="non-scaling-stroke"/><path transform="translate(1107.50,526.25) scale(1,0.88)" d="M1,0 H3.5 L4.5,1.5 V7.5 L3.5,9 H1 L0,7.5 V1.5 Z" vector-effect="non-scaling-stroke"/><path transform="translate(1113.90,526.25) scale(1,0.88)" d="M1,0 H3.5 L4.5,1.5 V7.5 L3.5,9 H1 L0,7.5 V1.5 Z" vector-effect="non-scaling-stroke"/></g>
<line x1="1063.5" y1="453" x2="1063.5" y2="609" stroke="#e6e6e6" />
<polygon points="1062.90,454.50 1061.60,457.00 1061.60,461.00 1065.40,461.00 1065.40,457.00 1064.10,454.50" fill="#e6e6e6" shape-rendering="auto"/>
<polygon points="1062.90,607.50 1061.60,605.00 1061.60,601.00 1065.40,601.00 1065.40,605.00 1064.10,607.50" fill="#e6e6e6" shape-rendering="auto"/>
<g fill="none" stroke="#d6d6d6" stroke-width="1.05" stroke-linejoin="round" shape-rendering="auto"><path transform="translate(1044.50,537.30) scale(1,0.88)" d="M1,0 H3.5 L4.5,1 V3 L3.5,4 H1 L0,5 V8 L1,9 H3.5 L4.5,8 V5 L3.5,4 M1,4 L0,3 V1 L1,0" vector-effect="non-scaling-stroke"/><path transform="translate(1051.40,537.30) scale(1,0.88)" d="M0,1.5 L1.5,0 V9 M0,9 H3" vector-effect="non-scaling-stroke"/><path transform="translate(1056.60,537.30) scale(1,0.88)" d="M0.1,8.3 H1.3 V9 H0.1 Z" vector-effect="non-scaling-stroke"/><path transform="translate(1059.60,537.30) scale(1,0.88)" d="M1,0 H3.5 L4.5,1.5 V7.5 L3.5,9 H1 L0,7.5 V1.5 Z" vector-effect="non-scaling-stroke"/><path transform="translate(1066.00,537.30) scale(1,0.88)" d="M1,0 H3.5 L4.5,1.5 V7.5 L3.5,9 H1 L0,7.5 V1.5 Z" vector-effect="non-scaling-stroke"/><path transform="translate(1072.40,537.30) scale(1,0.88)" d="M1,0 H3.5 L4.5,1.5 V7.5 L3.5,9 H1 L0,7.5 V1.5 Z" vector-effect="non-scaling-stroke"/><path transform="translate(1078.80,537.30) scale(1,0.88)" d="M1,0 H3.5 L4.5,1.5 V7.5 L3.5,9 H1 L0,7.5 V1.5 Z" vector-effect="non-scaling-stroke"/></g>
<line x1="1035.5" y1="493" x2="1035.5" y2="609" stroke="#e6e6e6" />
<polygon points="1034.90,494.50 1033.60,497.00 1033.60,501.00 1037.40,501.00 1037.40,497.00 1036.10,494.50" fill="#e6e6e6" shape-rendering="auto"/>
<polygon points="1034.90,607.50 1033.60,605.00 1033.60,601.00 1037.40,601.00 1037.40,605.00 1036.10,607.50" fill="#e6e6e6" shape-rendering="auto"/>
<g fill="none" stroke="#d6d6d6" stroke-width="1.05" stroke-linejoin="round" shape-rendering="auto"><path transform="translate(1015.30,548.30) scale(1,0.88)" d="M4.5,1 L3.5,0 H1 L0,1.5 V7.5 L1,9 H3.5 L4.5,7.5 V5.5 L3.5,4.5 H1 L0,5.5" vector-effect="non-scaling-stroke"/><path transform="translate(1022.20,548.30) scale(1,0.88)" d="M1,0 H3.5 L4.5,1.5 V7.5 L3.5,9 H1 L0,7.5 V1.5 Z" vector-effect="non-scaling-stroke"/><path transform="translate(1028.60,548.30) scale(1,0.88)" d="M0.1,8.3 H1.3 V9 H0.1 Z" vector-effect="non-scaling-stroke"/><path transform="translate(1031.60,548.30) scale(1,0.88)" d="M1,0 H3.5 L4.5,1.5 V7.5 L3.5,9 H1 L0,7.5 V1.5 Z" vector-effect="non-scaling-stroke"/><path transform="translate(1038.00,548.30) scale(1,0.88)" d="M1,0 H3.5 L4.5,1.5 V7.5 L3.5,9 H1 L0,7.5 V1.5 Z" vector-effect="non-scaling-stroke"/><path transform="translate(1044.40,548.30) scale(1,0.88)" d="M1,0 H3.5 L4.5,1.5 V7.5 L3.5,9 H1 L0,7.5 V1.5 Z" vector-effect="non-scaling-stroke"/><path transform="translate(1050.80,548.30) scale(1,0.88)" d="M1,0 H3.5 L4.5,1.5 V7.5 L3.5,9 H1 L0,7.5 V1.5 Z" vector-effect="non-scaling-stroke"/></g>
<line x1="1004.5" y1="528" x2="1004.5" y2="609" stroke="#e6e6e6" />
<polygon points="1003.90,529.50 1002.60,532.00 1002.60,536.00 1006.40,536.00 1006.40,532.00 1005.10,529.50" fill="#e6e6e6" shape-rendering="auto"/>
<polygon points="1003.90,607.50 1002.60,605.00 1002.60,601.00 1006.40,601.00 1006.40,605.00 1005.10,607.50" fill="#e6e6e6" shape-rendering="auto"/>
<g fill="none" stroke="#d6d6d6" stroke-width="1.05" stroke-linejoin="round" shape-rendering="auto"><path transform="translate(984.50,559.70) scale(1,0.88)" d="M4.5,9 V0 L0,6 H6" vector-effect="non-scaling-stroke"/><path transform="translate(992.30,559.70) scale(1,0.88)" d="M0,1.5 L1,0 H4.5 L5.5,1.5 V3.5 L0,8.5 V9 H5.5" vector-effect="non-scaling-stroke"/><path transform="translate(999.70,559.70) scale(1,0.88)" d="M0.1,8.3 H1.3 V9 H0.1 Z" vector-effect="non-scaling-stroke"/><path transform="translate(1002.70,559.70) scale(1,0.88)" d="M1,0 H3.5 L4.5,1.5 V7.5 L3.5,9 H1 L0,7.5 V1.5 Z" vector-effect="non-scaling-stroke"/><path transform="translate(1009.10,559.70) scale(1,0.88)" d="M1,0 H3.5 L4.5,1.5 V7.5 L3.5,9 H1 L0,7.5 V1.5 Z" vector-effect="non-scaling-stroke"/><path transform="translate(1015.50,559.70) scale(1,0.88)" d="M1,0 H3.5 L4.5,1.5 V7.5 L3.5,9 H1 L0,7.5 V1.5 Z" vector-effect="non-scaling-stroke"/><path transform="translate(1021.90,559.70) scale(1,0.88)" d="M1,0 H3.5 L4.5,1.5 V7.5 L3.5,9 H1 L0,7.5 V1.5 Z" vector-effect="non-scaling-stroke"/></g>
<line x1="972.5" y1="542" x2="972.5" y2="609" stroke="#e6e6e6" />
<polygon points="971.90,543.50 970.60,546.00 970.60,550.00 974.40,550.00 974.40,546.00 973.10,543.50" fill="#e6e6e6" shape-rendering="auto"/>
<polygon points="971.90,607.50 970.60,605.00 970.60,601.00 974.40,601.00 974.40,605.00 973.10,607.50" fill="#e6e6e6" shape-rendering="auto"/>
<g fill="none" stroke="#d6d6d6" stroke-width="1.05" stroke-linejoin="round" shape-rendering="auto"><path transform="translate(951.90,573.00) scale(1,0.88)" d="M0,0 H5 L2.5,3.5 H3.5 L5,5 V7.5 L3.5,9 H1.5 L0,7.5" vector-effect="non-scaling-stroke"/><path transform="translate(959.10,573.00) scale(1,0.88)" d="M5,0 H0.5 L0,4 H3.5 L5,5.5 V7.5 L3.5,9 H1 L0,7.5" vector-effect="non-scaling-stroke"/><path transform="translate(966.30,573.00) scale(1,0.88)" d="M0.1,8.3 H1.3 V9 H0.1 Z" vector-effect="non-scaling-stroke"/><path transform="translate(969.30,573.00) scale(1,0.88)" d="M1,0 H3.5 L4.5,1.5 V7.5 L3.5,9 H1 L0,7.5 V1.5 Z" vector-effect="non-scaling-stroke"/><path transform="translate(975.70,573.00) scale(1,0.88)" d="M1,0 H3.5 L4.5,1.5 V7.5 L3.5,9 H1 L0,7.5 V1.5 Z" vector-effect="non-scaling-stroke"/><path transform="translate(982.10,573.00) scale(1,0.88)" d="M1,0 H3.5 L4.5,1.5 V7.5 L3.5,9 H1 L0,7.5 V1.5 Z" vector-effect="non-scaling-stroke"/><path transform="translate(988.50,573.00) scale(1,0.88)" d="M1,0 H3.5 L4.5,1.5 V7.5 L3.5,9 H1 L0,7.5 V1.5 Z" vector-effect="non-scaling-stroke"/></g>
<line x1="913.5" y1="559" x2="913.5" y2="609" stroke="#e6e6e6" />
<polygon points="912.90,560.50 911.60,563.00 911.60,567.00 915.40,567.00 915.40,563.00 914.10,560.50" fill="#e6e6e6" shape-rendering="auto"/>
<polygon points="912.90,607.50 911.60,605.00 911.60,601.00 915.40,601.00 915.40,605.00 914.10,607.50" fill="#e6e6e6" shape-rendering="auto"/>
<g fill="none" stroke="#d6d6d6" stroke-width="1.05" stroke-linejoin="round" shape-rendering="auto"><path transform="translate(892.70,580.90) scale(1,0.88)" d="M0,1.5 L1,0 H4.5 L5.5,1.5 V3.5 L0,8.5 V9 H5.5" vector-effect="non-scaling-stroke"/><path transform="translate(900.10,580.90) scale(1,0.88)" d="M4.5,1 L3.5,0 H1 L0,1.5 V7.5 L1,9 H3.5 L4.5,7.5 V5.5 L3.5,4.5 H1 L0,5.5" vector-effect="non-scaling-stroke"/><path transform="translate(907.00,580.90) scale(1,0.88)" d="M0.1,8.3 H1.3 V9 H0.1 Z" vector-effect="non-scaling-stroke"/><path transform="translate(910.00,580.90) scale(1,0.88)" d="M1,0 H3.5 L4.5,1.5 V7.5 L3.5,9 H1 L0,7.5 V1.5 Z" vector-effect="non-scaling-stroke"/><path transform="translate(916.40,580.90) scale(1,0.88)" d="M1,0 H3.5 L4.5,1.5 V7.5 L3.5,9 H1 L0,7.5 V1.5 Z" vector-effect="non-scaling-stroke"/><path transform="translate(922.80,580.90) scale(1,0.88)" d="M1,0 H3.5 L4.5,1.5 V7.5 L3.5,9 H1 L0,7.5 V1.5 Z" vector-effect="non-scaling-stroke"/><path transform="translate(929.20,580.90) scale(1,0.88)" d="M1,0 H3.5 L4.5,1.5 V7.5 L3.5,9 H1 L0,7.5 V1.5 Z" vector-effect="non-scaling-stroke"/></g>
<line x1="389" y1="382.5" x2="405" y2="382.5" stroke="#e6e6e6" />
<polygon points="403.50,381.90 401.00,380.60 397.00,380.60 397.00,384.40 401.00,384.40 403.50,383.10" fill="#e6e6e6" shape-rendering="auto"/>
<line x1="416" y1="382.5" x2="431" y2="382.5" stroke="#e6e6e6" />
<polygon points="417.50,381.90 420.00,380.60 424.00,380.60 424.00,384.40 420.00,384.40 417.50,383.10" fill="#e6e6e6" shape-rendering="auto"/>
<g fill="none" stroke="#d6d6d6" stroke-width="1.05" stroke-linejoin="round" shape-rendering="auto"><path transform="translate(432.50,379.50) scale(1,0.88)" d="M4.5,1 L3.5,0 H1 L0,1.5 V7.5 L1,9 H3.5 L4.5,7.5 V5.5 L3.5,4.5 H1 L0,5.5" vector-effect="non-scaling-stroke"/><path transform="translate(439.40,379.50) scale(1,0.88)" d="M0.1,8.3 H1.3 V9 H0.1 Z" vector-effect="non-scaling-stroke"/><path transform="translate(442.40,379.50) scale(1,0.88)" d="M0,1.5 L1,0 H4.5 L5.5,1.5 V3.5 L0,8.5 V9 H5.5" vector-effect="non-scaling-stroke"/><path transform="translate(449.80,379.50) scale(1,0.88)" d="M1,0 H3.5 L4.5,1.5 V7.5 L3.5,9 H1 L0,7.5 V1.5 Z" vector-effect="non-scaling-stroke"/><path transform="translate(456.20,379.50) scale(1,0.88)" d="M1,0 H3.5 L4.5,1.5 V7.5 L3.5,9 H1 L0,7.5 V1.5 Z" vector-effect="non-scaling-stroke"/><path transform="translate(462.60,379.50) scale(1,0.88)" d="M1,0 H3.5 L4.5,1.5 V7.5 L3.5,9 H1 L0,7.5 V1.5 Z" vector-effect="non-scaling-stroke"/></g>
<line x1="387" y1="443.5" x2="425.5" y2="443.5" stroke="#e6e6e6" />
<polygon points="388.50,442.90 391.00,441.60 395.00,441.60 395.00,445.40 391.00,445.40 388.50,444.10" fill="#e6e6e6" shape-rendering="auto"/>
<polygon points="403.50,442.90 401.00,441.60 397.00,441.60 397.00,445.40 401.00,445.40 403.50,444.10" fill="#e6e6e6" shape-rendering="auto"/>
<g fill="none" stroke="#d6d6d6" stroke-width="1.05" stroke-linejoin="round" shape-rendering="auto"><path transform="translate(427.00,440.50) scale(1,0.88)" d="M4.5,4 L3.5,5 H1 L0,4 V1.5 L1,0 H3.5 L4.5,1.5 V7.5 L3.5,9 H1 L0,8" vector-effect="non-scaling-stroke"/><path transform="translate(433.90,440.50) scale(1,0.88)" d="M0.1,8.3 H1.3 V9 H0.1 Z" vector-effect="non-scaling-stroke"/><path transform="translate(436.90,440.50) scale(1,0.88)" d="M0,1.5 L1,0 H4.5 L5.5,1.5 V3.5 L0,8.5 V9 H5.5" vector-effect="non-scaling-stroke"/><path transform="translate(444.30,440.50) scale(1,0.88)" d="M1,0 H3.5 L4.5,1.5 V7.5 L3.5,9 H1 L0,7.5 V1.5 Z" vector-effect="non-scaling-stroke"/><path transform="translate(450.70,440.50) scale(1,0.88)" d="M1,0 H3.5 L4.5,1.5 V7.5 L3.5,9 H1 L0,7.5 V1.5 Z" vector-effect="non-scaling-stroke"/><path transform="translate(457.10,440.50) scale(1,0.88)" d="M1,0 H3.5 L4.5,1.5 V7.5 L3.5,9 H1 L0,7.5 V1.5 Z" vector-effect="non-scaling-stroke"/></g>
<line x1="369" y1="510.5" x2="416" y2="510.5" stroke="#e6e6e6" />
<polygon points="388.50,509.90 391.00,508.60 395.00,508.60 395.00,512.40 391.00,512.40 388.50,511.10" fill="#e6e6e6" shape-rendering="auto"/>
<polygon points="414.50,509.90 412.00,508.60 408.00,508.60 408.00,512.40 412.00,512.40 414.50,511.10" fill="#e6e6e6" shape-rendering="auto"/>
<g fill="none" stroke="#d6d6d6" stroke-width="1.05" stroke-linejoin="round" shape-rendering="auto"><path transform="translate(328.20,506.80) scale(1,0.88)" d="M0,1.5 L1.5,0 V9 M0,9 H3" vector-effect="non-scaling-stroke"/><path transform="translate(333.40,506.80) scale(1,0.88)" d="M5,0 H0.5 L0,4 H3.5 L5,5.5 V7.5 L3.5,9 H1 L0,7.5" vector-effect="non-scaling-stroke"/><path transform="translate(340.60,506.80) scale(1,0.88)" d="M0.1,8.3 H1.3 V9 H0.1 Z" vector-effect="non-scaling-stroke"/><path transform="translate(343.60,506.80) scale(1,0.88)" d="M4.5,9 V0 L0,6 H6" vector-effect="non-scaling-stroke"/><path transform="translate(351.40,506.80) scale(1,0.88)" d="M1,0 H3.5 L4.5,1.5 V7.5 L3.5,9 H1 L0,7.5 V1.5 Z" vector-effect="non-scaling-stroke"/><path transform="translate(357.80,506.80) scale(1,0.88)" d="M1,0 H3.5 L4.5,1.5 V7.5 L3.5,9 H1 L0,7.5 V1.5 Z" vector-effect="non-scaling-stroke"/><path transform="translate(364.20,506.80) scale(1,0.88)" d="M1,0 H3.5 L4.5,1.5 V7.5 L3.5,9 H1 L0,7.5 V1.5 Z" vector-effect="non-scaling-stroke"/></g>
<line x1="375" y1="580.5" x2="418" y2="580.5" stroke="#e6e6e6" />
<polygon points="376.50,579.90 379.00,578.60 383.00,578.60 383.00,582.40 379.00,582.40 376.50,581.10" fill="#e6e6e6" shape-rendering="auto"/>
<polygon points="403.50,579.90 401.00,578.60 397.00,578.60 397.00,582.40 401.00,582.40 403.50,581.10" fill="#e6e6e6" shape-rendering="auto"/>
<g fill="none" stroke="#d6d6d6" stroke-width="1.05" stroke-linejoin="round" shape-rendering="auto"><path transform="translate(419.50,576.70) scale(1,0.88)" d="M0,1.5 L1.5,0 V9 M0,9 H3" vector-effect="non-scaling-stroke"/><path transform="translate(424.70,576.70) scale(1,0.88)" d="M5,0 H0.5 L0,4 H3.5 L5,5.5 V7.5 L3.5,9 H1 L0,7.5" vector-effect="non-scaling-stroke"/><path transform="translate(431.90,576.70) scale(1,0.88)" d="M0.1,8.3 H1.3 V9 H0.1 Z" vector-effect="non-scaling-stroke"/><path transform="translate(434.90,576.70) scale(1,0.88)" d="M0,1.5 L1,0 H4.5 L5.5,1.5 V3.5 L0,8.5 V9 H5.5" vector-effect="non-scaling-stroke"/><path transform="translate(442.30,576.70) scale(1,0.88)" d="M1,0 H3.5 L4.5,1.5 V7.5 L3.5,9 H1 L0,7.5 V1.5 Z" vector-effect="non-scaling-stroke"/><path transform="translate(448.70,576.70) scale(1,0.88)" d="M1,0 H3.5 L4.5,1.5 V7.5 L3.5,9 H1 L0,7.5 V1.5 Z" vector-effect="non-scaling-stroke"/><path transform="translate(455.10,576.70) scale(1,0.88)" d="M1,0 H3.5 L4.5,1.5 V7.5 L3.5,9 H1 L0,7.5 V1.5 Z" vector-effect="non-scaling-stroke"/></g>
<line x1="828" y1="582.5" x2="866" y2="582.5" stroke="#e6e6e6" />
<polygon points="841.50,581.90 844.00,580.60 848.00,580.60 848.00,584.40 844.00,584.40 841.50,583.10" fill="#e6e6e6" shape-rendering="auto"/>
<polygon points="864.50,581.90 862.00,580.60 858.00,580.60 858.00,584.40 862.00,584.40 864.50,583.10" fill="#e6e6e6" shape-rendering="auto"/>
<g fill="none" stroke="#d6d6d6" stroke-width="1.05" stroke-linejoin="round" shape-rendering="auto"><path transform="translate(786.25,578.50) scale(1,0.88)" d="M0,1.5 L1.5,0 V9 M0,9 H3" vector-effect="non-scaling-stroke"/><path transform="translate(791.45,578.50) scale(1,0.88)" d="M0,0 H5 L2.5,3.5 H3.5 L5,5 V7.5 L3.5,9 H1.5 L0,7.5" vector-effect="non-scaling-stroke"/><path transform="translate(798.65,578.50) scale(1,0.88)" d="M0.1,8.3 H1.3 V9 H0.1 Z" vector-effect="non-scaling-stroke"/><path transform="translate(801.65,578.50) scale(1,0.88)" d="M4.5,9 V0 L0,6 H6" vector-effect="non-scaling-stroke"/><path transform="translate(809.45,578.50) scale(1,0.88)" d="M1,0 H3.5 L4.5,1.5 V7.5 L3.5,9 H1 L0,7.5 V1.5 Z" vector-effect="non-scaling-stroke"/><path transform="translate(815.85,578.50) scale(1,0.88)" d="M1,0 H3.5 L4.5,1.5 V7.5 L3.5,9 H1 L0,7.5 V1.5 Z" vector-effect="non-scaling-stroke"/><path transform="translate(822.25,578.50) scale(1,0.88)" d="M1,0 H3.5 L4.5,1.5 V7.5 L3.5,9 H1 L0,7.5 V1.5 Z" vector-effect="non-scaling-stroke"/></g>
<line x1="405" y1="629.5" x2="609" y2="629.5" stroke="#e6e6e6" />
<line x1="663" y1="629.5" x2="866" y2="629.5" stroke="#e6e6e6" />
<polygon points="406.50,628.90 409.00,627.60 413.00,627.60 413.00,631.40 409.00,631.40 406.50,630.10" fill="#e6e6e6" shape-rendering="auto"/>
<polygon points="864.50,628.90 862.00,627.60 858.00,627.60 858.00,631.40 862.00,631.40 864.50,630.10" fill="#e6e6e6" shape-rendering="auto"/>
<g fill="none" stroke="#d6d6d6" stroke-width="1.05" stroke-linejoin="round" shape-rendering="auto"><path transform="translate(610.50,625.50) scale(1,0.88)" d="M0,1.5 L1,0 H4.5 L5.5,1.5 V3.5 L0,8.5 V9 H5.5" vector-effect="non-scaling-stroke"/><path transform="translate(617.90,625.50) scale(1,0.88)" d="M0,0 H5 L2.5,3.5 H3.5 L5,5 V7.5 L3.5,9 H1.5 L0,7.5" vector-effect="non-scaling-stroke"/><path transform="translate(625.10,625.50) scale(1,0.88)" d="M1,0 H3.5 L4.5,1 V3 L3.5,4 H1 L0,5 V8 L1,9 H3.5 L4.5,8 V5 L3.5,4 M1,4 L0,3 V1 L1,0" vector-effect="non-scaling-stroke"/><path transform="translate(632.00,625.50) scale(1,0.88)" d="M0.1,8.3 H1.3 V9 H0.1 Z" vector-effect="non-scaling-stroke"/><path transform="translate(635.00,625.50) scale(1,0.88)" d="M4.5,1 L3.5,0 H1 L0,1.5 V7.5 L1,9 H3.5 L4.5,7.5 V5.5 L3.5,4.5 H1 L0,5.5" vector-effect="non-scaling-stroke"/><path transform="translate(641.90,625.50) scale(1,0.88)" d="M1,0 H3.5 L4.5,1.5 V7.5 L3.5,9 H1 L0,7.5 V1.5 Z" vector-effect="non-scaling-stroke"/><path transform="translate(648.30,625.50) scale(1,0.88)" d="M1,0 H3.5 L4.5,1.5 V7.5 L3.5,9 H1 L0,7.5 V1.5 Z" vector-effect="non-scaling-stroke"/><path transform="translate(654.70,625.50) scale(1,0.88)" d="M1,0 H3.5 L4.5,1.5 V7.5 L3.5,9 H1 L0,7.5 V1.5 Z" vector-effect="non-scaling-stroke"/></g>
<line x1="964" y1="239.5" x2="1037" y2="239.5" stroke="#f0f0f0" />
<line x1="1000.5" y1="203" x2="1000.5" y2="277" stroke="#f0f0f0" />
<rect x="22.5" y="762.5" width="13" height="14" fill="none" stroke="#d8d8d8"/>
<line x1="29.5" y1="703" x2="29.5" y2="769" stroke="#d8d8d8" />
<line x1="29" y1="769.5" x2="94" y2="769.5" stroke="#d8d8d8" />
<polygon points="29.5,688 23,703.5 36,703.5" fill="none" stroke="#d8d8d8"/>
<polygon points="110,769.5 94.5,763 94.5,776" fill="none" stroke="#d8d8d8"/>
<path d="M24 660 L30.5 668 L37 660 M30.5 668 V676.5" fill="none" stroke="#d8d8d8"/>
<path d="M123 762 L135 777.5 M135 762 L123 777.5" fill="none" stroke="#d8d8d8"/>
</svg>
</div></body></html>
